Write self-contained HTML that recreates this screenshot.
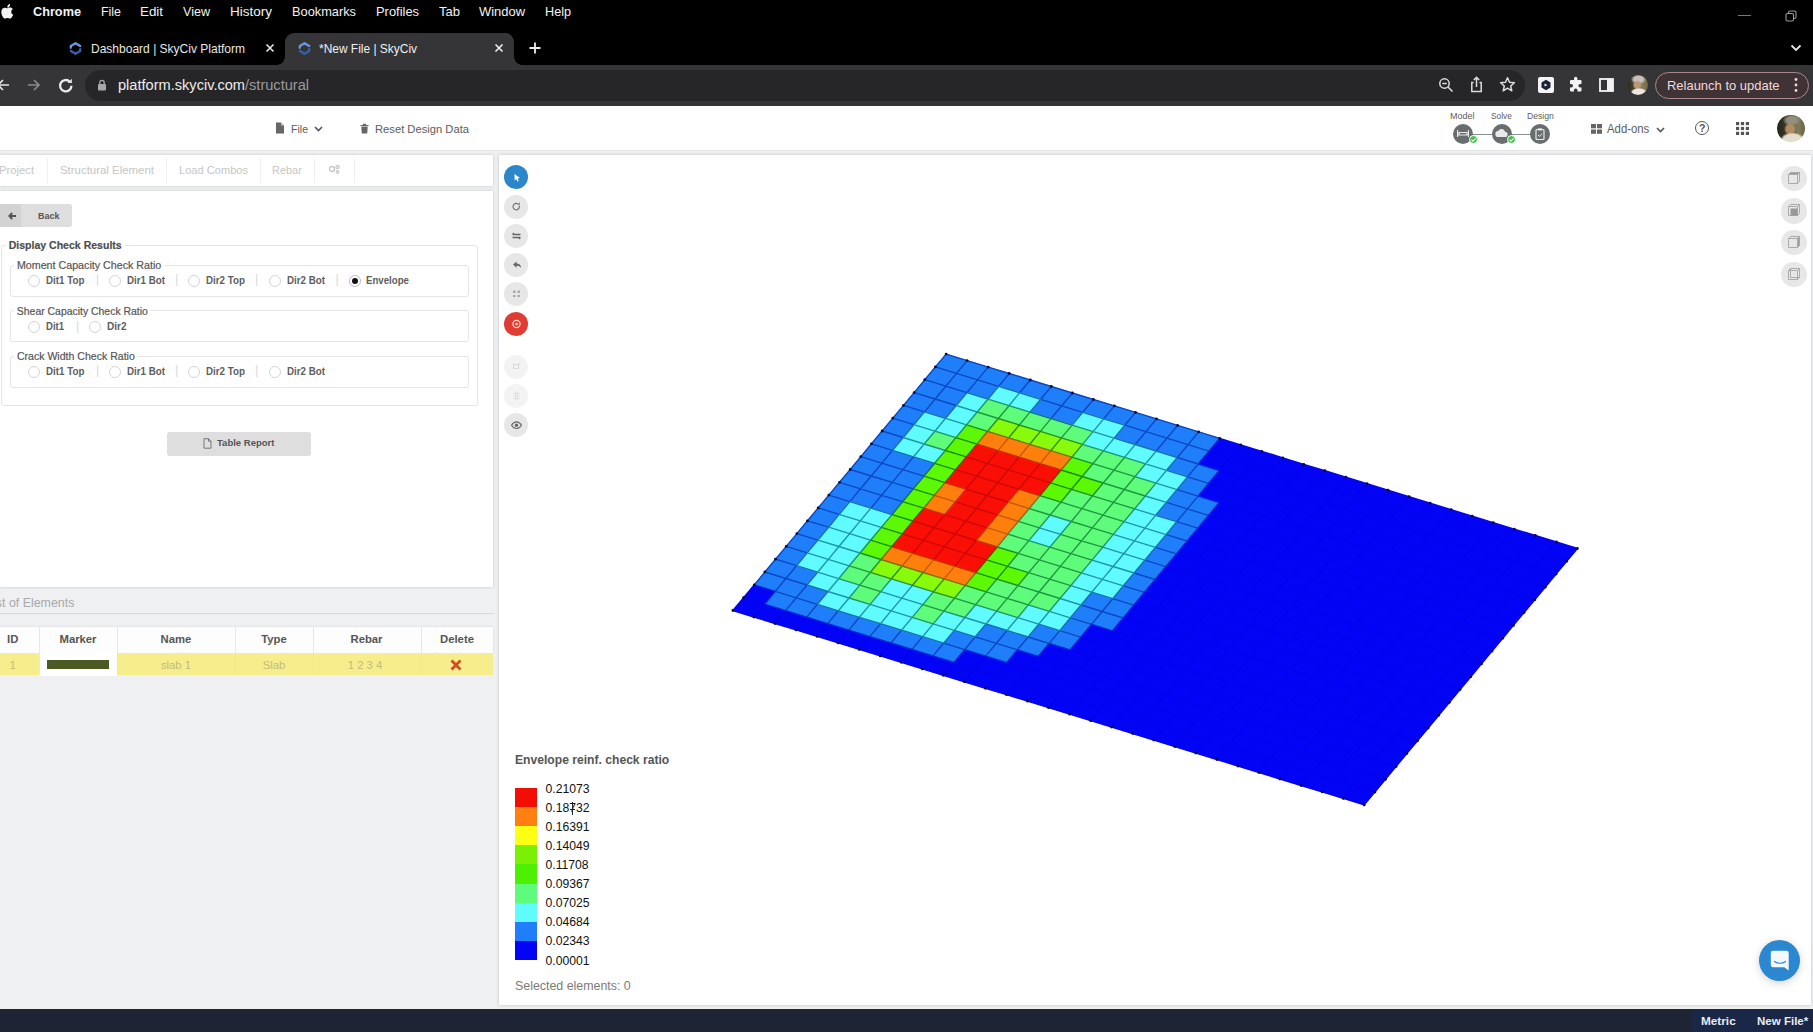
<!DOCTYPE html>
<html><head><meta charset="utf-8"><title>SkyCiv</title>
<style>
*{box-sizing:border-box;margin:0;padding:0}
html,body{width:1813px;height:1032px;overflow:hidden;background:#eff0f1;font-family:"Liberation Sans",sans-serif}
.abs,.t{position:absolute;white-space:nowrap}
.t{line-height:1;transform-origin:0 50%}
#menubar{left:0;top:0;width:1813px;height:65px;background:#000}
.mb{color:#f2f2f2;font-size:13.2px;top:5px}
#toolbar{left:0;top:65px;width:1813px;height:40.5px;background:#353537}
#activetab{left:285px;top:33px;width:229px;height:32px;background:#353537;border-radius:9px 9px 0 0}
#pill{left:85px;top:69.500px;width:1440px;height:31px;border-radius:15.500px;background:#262628}
#apphead{left:0;top:105.500px;width:1813px;height:45px;background:#fff;border-bottom:1px solid #e2e2e2}
#tabs{left:0;top:155px;width:493px;height:31px;background:#fff;box-shadow:0 0 3px rgba(0,0,0,.18)}
#card{left:0;top:191px;width:493px;height:395.500px;background:#fff;box-shadow:0 0 3px rgba(0,0,0,.18)}
.tab{color:#c6c6c6;font-size:11.3px;top:165px}
.sep{width:1px;background:#efefef;top:158px;height:25px}
.fs{border:1px solid #e5e5e5;border-radius:3px}
.lg{background:#fff;color:#555;font-size:11px;-webkit-text-stroke:.2px #555}
.radio{width:12px;height:12px;border-radius:50%;border:1px solid #d4d4d4;background:#fff}
.rl{color:#5e5e5e;font-size:10px;font-weight:bold;margin-top:.9px}
.bar{color:#d8d8d8;font-size:12px}
.btn{background:#dedede;border-radius:3px}
#canvas{left:499px;top:155px;width:1312px;height:850px;background:#fff;box-shadow:0 0 3px rgba(0,0,0,.2)}
.tool{width:24px;height:24px;border-radius:50%;background:#e7e7e7}
#status{left:0;top:1009px;width:1813px;height:23px;background:#1e2433}
.th{color:#555;font-size:11.3px;font-weight:bold;top:633.8px}
.td{color:#c4bc79;font-size:11.3px;top:659.8px}
</style><style>#m0{transform:scaleX(0.963)}#m1{transform:scaleX(0.941)}#m2{transform:scaleX(1.012)}#m3{transform:scaleX(0.952)}#m4{transform:scaleX(1.024)}#m5{transform:scaleX(0.970)}#m6{transform:scaleX(0.978)}#m7{transform:scaleX(0.988)}#m8{transform:scaleX(0.981)}#m9{transform:scaleX(0.959)}#tb1{transform:scaleX(0.986)}#tb2{transform:scaleX(0.980)}#url{transform:scaleX(1.042)}#relaunch{transform:scaleX(0.975)}#hfile{transform:scaleX(0.917)}#hreset{transform:scaleX(0.974)}#hmodel{transform:scaleX(1.003)}#hsolve{transform:scaleX(0.928)}#hdesign{transform:scaleX(0.960)}#haddons{transform:scaleX(0.946)}#tse{transform:scaleX(1.011)}#tlc{transform:scaleX(0.981)}#trb{transform:scaleX(0.968)}#back{transform:scaleX(0.909)}#dcr{transform:scaleX(0.893)}#l1{transform:scaleX(0.972)}#l2{transform:scaleX(0.948)}#l3{transform:scaleX(0.960)}#r11{transform:scaleX(0.978)}#r12{transform:scaleX(0.977)}#r13{transform:scaleX(0.979)}#r14{transform:scaleX(0.977)}#r15{transform:scaleX(0.967)}#r21{transform:scaleX(0.952)}#r22{transform:scaleX(1.002)}#r31{transform:scaleX(0.978)}#r32{transform:scaleX(0.977)}#r33{transform:scaleX(0.979)}#r34{transform:scaleX(0.977)}#trep{transform:scaleX(0.964)}#lgt{transform:scaleX(1.010)}#sel{transform:scaleX(1.033)}#metric{transform:scaleX(1.091)}#newfile{transform:scaleX(1.068)}</style></head><body>

<!-- ===== macOS menu bar + chrome tab strip ===== -->
<div id="menubar" class="abs"></div>
<svg class="abs" style="left:-.3px;top:3px" width="14" height="17" viewBox="0 0 14 17"><path d="M11.2 9c0-1.9 1.5-2.8 1.6-2.9-.9-1.3-2.200-1.400-2.700-1.500-1.100-.1-2.200.700-2.800.700-.6 0-1.500-.700-2.400-.600C3.600 4.700 2.500 5.400 1.900 6.500.600 8.700 1.600 12 2.800 13.800c.6.900 1.300 1.900 2.300 1.800.9 0 1.300-.6 2.400-.6s1.400.6 2.400.6 1.600-.900 2.200-1.800c.7-1 1-2 1-2.100 0 0-1.900-.700-1.900-2.700zM9.400 3.400c.5-.6.800-1.500.7-2.300-.7 0-1.600.5-2.100 1.100-.5.500-.9 1.400-.7 2.200.8.100 1.600-.4 2.100-1z" fill="#f2f2f2"/></svg>
<span class="t mb" style="left:33px;font-weight:bold" id="m0">Chrome</span>
<span class="t mb" style="left:101px" id="m1">File</span>
<span class="t mb" style="left:140px" id="m2">Edit</span>
<span class="t mb" style="left:183px" id="m3">View</span>
<span class="t mb" style="left:230px" id="m4">History</span>
<span class="t mb" style="left:292px" id="m5">Bookmarks</span>
<span class="t mb" style="left:376px" id="m6">Profiles</span>
<span class="t mb" style="left:439px" id="m7">Tab</span>
<span class="t mb" style="left:479px" id="m8">Window</span>
<span class="t mb" style="left:545px" id="m9">Help</span>
<!-- window controls -->
<div class="abs" style="left:1738px;top:15px;width:13px;height:1px;background:#777"></div>
<svg class="abs" style="left:1785px;top:10px" width="12" height="12" viewBox="0 0 12 12" fill="none" stroke="#9a9a9a" stroke-width="1.1"><rect x="1" y="3.500" width="7.500" height="7.500" rx="1.500"/><path d="M3.500 3.500V2.500a1.500 1.500 0 0 1 1.500-1.500h4.500a1.500 1.500 0 0 1 1.500 1.500v4.500a1.500 1.500 0 0 1-1.500 1.500h-1"/></svg>
<svg class="abs" style="left:1790px;top:44px" width="12" height="8" viewBox="0 0 12 8" fill="none" stroke="#e8e8e8" stroke-width="1.800"><path d="M1.500 1.500l4.500 4.500 4.500-4.500"/></svg>

<!-- tabs -->
<div id="activetab" class="abs"></div>
<div class="abs" style="left:277px;top:57px;width:8px;height:8px;background:radial-gradient(circle at 0 0,#000 7.500px,#353538 8px)"></div>
<div class="abs" style="left:514px;top:57px;width:8px;height:8px;background:radial-gradient(circle at 100% 0,#000 7.500px,#353538 8px)"></div>
<svg class="abs" style="left:68px;top:41px" width="15" height="15" viewBox="0 0 15 15" fill="none" stroke-linecap="round" stroke-linejoin="round"><path d="M2.800 6.800V5L7.500 2.200 12.200 5" stroke="#6a98dc" stroke-width="2.300"/><path d="M12.200 8.200V10L7.500 12.800 2.800 10" stroke="#3a5fa8" stroke-width="2.300"/></svg>
<span class="t" style="left:91px;top:42.500px;color:#e8e8e8;font-size:12.200px" id="tb1">Dashboard | SkyCiv Platform</span>
<svg class="abs" style="left:265px;top:43px" width="10" height="10" viewBox="0 0 10 10" stroke="#e8e8e8" stroke-width="1.600"><path d="M1.500 1.500l7 7M8.500 1.500l-7 7"/></svg>
<svg class="abs" style="left:297px;top:41px" width="15" height="15" viewBox="0 0 15 15" fill="none" stroke-linecap="round" stroke-linejoin="round"><path d="M2.800 6.800V5L7.500 2.200 12.200 5" stroke="#6a98dc" stroke-width="2.300"/><path d="M12.200 8.200V10L7.500 12.800 2.800 10" stroke="#3a5fa8" stroke-width="2.300"/></svg>
<span class="t" style="left:319px;top:42.500px;color:#f0f0f0;font-size:12.200px" id="tb2">*New File | SkyCiv</span>
<svg class="abs" style="left:494px;top:43px" width="10" height="10" viewBox="0 0 10 10" stroke="#f0f0f0" stroke-width="1.600"><path d="M1.500 1.500l7 7M8.500 1.500l-7 7"/></svg>
<svg class="abs" style="left:529px;top:42px" width="12" height="12" viewBox="0 0 12 12" stroke="#f0f0f0" stroke-width="1.800"><path d="M6 .5v11M.5 6h11"/></svg>

<!-- toolbar -->
<div id="toolbar" class="abs"></div>
<div id="pill" class="abs"></div>
<svg class="abs" style="left:-4px;top:78px" width="14" height="14" viewBox="0 0 14 14" fill="none" stroke="#e4e4e4" stroke-width="1.700"><path d="M13 7H2M7 2L2 7l5 5"/></svg>
<svg class="abs" style="left:27px;top:78px" width="14" height="14" viewBox="0 0 14 14" fill="none" stroke="#8a8a8c" stroke-width="1.700"><path d="M1 7h11M7 2l5 5-5 5"/></svg>
<svg class="abs" style="left:56.500px;top:76.500px" width="17.500" height="17.500" viewBox="0 0 16 16" fill="none" stroke="#ececec" stroke-width="2.100"><path d="M13.200 8a5.200 5.200 0 1 1-1.600-3.800"/><path d="M13.600 1.500v4h-4z" fill="#e4e4e4" stroke="none"/></svg>
<svg class="abs" style="left:97px;top:79px" width="10" height="12" viewBox="0 0 10 12"><rect x="1" y="5" width="8" height="6.500" rx="1" fill="#a8a8aa"/><path d="M2.800 5V3.500a2.200 2.200 0 0 1 4.400 0V5" fill="none" stroke="#a8a8aa" stroke-width="1.300"/></svg>
<span class="t" style="left:118px;top:78px;color:#ededed;font-size:14px" id="url">platform.skyciv.com<span style="color:#9b9b9d">/structural</span></span>
<!-- right icons -->
<svg class="abs" style="left:1438px;top:77px" width="16" height="16" viewBox="0 0 16 16" fill="none" stroke="#dcdcdc" stroke-width="1.500"><circle cx="6.500" cy="6.500" r="4.700"/><path d="M10 10l4.500 4.500M4.300 6.500h4.400"/></svg>
<svg class="abs" style="left:1469px;top:76px" width="15" height="17" viewBox="0 0 15 17" fill="none" stroke="#dcdcdc" stroke-width="1.500"><path d="M4.500 6.500H2.800v9h9.400v-9h-1.700M7.500 11V1.500M4.800 4L7.500 1.300 10.200 4"/></svg>
<svg class="abs" style="left:1499px;top:76px" width="17" height="17" viewBox="0 0 17 17" fill="none" stroke="#dcdcdc" stroke-width="1.500" stroke-linejoin="round"><path d="M8.500 1.800l2 4.500 4.900.5-3.700 3.200 1.100 4.800-4.300-2.600-4.300 2.600 1.100-4.800L1.600 6.800l4.900-.5z"/></svg>
<div class="abs" style="left:1538px;top:77px;width:16px;height:16px;background:#f4f4f4;border-radius:2px"></div>
<svg class="abs" style="left:1540px;top:79px" width="12" height="12" viewBox="0 0 12 12"><path d="M6 .8l4.500 2.600v5.200L6 11.200 1.500 8.600V3.400z" fill="#1a2438"/><path d="M4.500 4.500l3 1.500-3 1.500z" fill="#f4f4f4"/></svg>
<svg class="abs" style="left:1567px;top:76px" width="18" height="18" viewBox="0 0 18 18"><path d="M7 2.500a1.700 1.700 0 0 1 3.400 0V4h3.100a1 1 0 0 1 1 1v3h-1.300a1.800 1.800 0 0 0 0 3.600h1.300v3a1 1 0 0 1-1 1h-3v-1.300a1.800 1.800 0 0 0-3.600 0v1.300H4a1 1 0 0 1-1-1v-3.100h1.300a1.700 1.700 0 0 0 0-3.400H3V5a1 1 0 0 1 1-1h3z" fill="#f2f2f2"/></svg>
<svg class="abs" style="left:1599px;top:78px" width="15" height="14" viewBox="0 0 15 14"><rect x="1" y="1" width="13" height="12" fill="none" stroke="#f2f2f2" stroke-width="1.800"/><rect x="8" y="1" width="6" height="12" fill="#f2f2f2"/></svg>
<div class="abs" style="left:1627.500px;top:74.500px;width:20.500px;height:20.500px;border-radius:50%;background:radial-gradient(ellipse 42% 24% at 54% 88%,#efe6dc 0 75%,transparent 100%),radial-gradient(ellipse 24% 24% at 47% 50%,#b99873 0 65%,transparent 100%),radial-gradient(ellipse 38% 26% at 52% 22%,#cbbfbd 0 60%,transparent 100%),linear-gradient(90deg,#2e2e1e 0%,#48462f 35%,#857d56 75%,#6e6848 100%)"></div>
<div class="abs" style="left:1655px;top:72px;width:154px;height:27px;border-radius:14px;background:#3f3336;border:1px solid #a98a90"></div>
<span class="t" style="left:1667px;top:78.600px;color:#f3d9dc;font-size:13.300px" id="relaunch">Relaunch to update</span>
<svg class="abs" style="left:1794px;top:77px" width="4" height="16" viewBox="0 0 4 16" fill="#f3d9dc"><circle cx="2" cy="2.500" r="1.400"/><circle cx="2" cy="8" r="1.400"/><circle cx="2" cy="13.500" r="1.400"/></svg>

<!-- ===== app header ===== -->
<div id="apphead" class="abs"></div>
<svg class="abs" style="left:275px;top:122px" width="10" height="12" viewBox="0 0 10 12"><path d="M1 .5h5l3 3v8H1z" fill="#666"/><path d="M6 .5v3h3" fill="#bbb"/></svg>
<span class="t" style="left:291px;top:123.700px;color:#5c5c5c;font-size:11.500px" id="hfile">File</span>
<svg class="abs" style="left:314px;top:126px" width="9" height="6" viewBox="0 0 9 6" fill="none" stroke="#555" stroke-width="1.600"><path d="M1 1l3.500 3.500L8 1"/></svg>
<svg class="abs" style="left:360px;top:123px" width="9" height="11" viewBox="0 0 9 11"><path d="M.5 2h8v1h-8zM3 .8h3v1.200H3zM1.300 3.600h6.400l-.5 6.900H1.800z" fill="#666"/></svg>
<span class="t" style="left:375px;top:123.700px;color:#5c5c5c;font-size:11.500px" id="hreset">Reset Design Data</span>
<span class="t" style="left:1450px;top:111.700px;color:#5c5c5c;font-size:9px" id="hmodel">Model</span>
<span class="t" style="left:1491px;top:111.700px;color:#5c5c5c;font-size:9px" id="hsolve">Solve</span>
<span class="t" style="left:1527px;top:111.700px;color:#5c5c5c;font-size:9px" id="hdesign">Design</span>
<div class="abs" style="left:1463px;top:133.500px;width:78px;height:1px;background:#8a8f8f"></div>
<div class="abs" style="left:1453px;top:124px;width:20px;height:20px;border-radius:50%;background:#686d6d"></div>
<div class="abs" style="left:1491.500px;top:124px;width:20px;height:20px;border-radius:50%;background:#686d6d"></div>
<div class="abs" style="left:1530px;top:124px;width:20px;height:20px;border-radius:50%;background:#686d6d"></div>
<svg class="abs" style="left:1457px;top:129px" width="12" height="9" viewBox="0 0 12 9"><path d="M.5 1v7M11.500 1v7M.5 6h11M2 5.500V3.500h8v2" fill="none" stroke="#e8eaea" stroke-width="1.200"/></svg>
<svg class="abs" style="left:1495px;top:128px" width="13" height="10" viewBox="0 0 13 10"><path d="M3.500 9a3 3 0 0 1-.3-6A3.600 3.600 0 0 1 10 3.800 2.600 2.600 0 0 1 10 9z" fill="#e8eaea"/></svg>
<svg class="abs" style="left:1535px;top:128px" width="10" height="12" viewBox="0 0 10 12"><rect x="1" y="1.500" width="8" height="10" rx="1" fill="none" stroke="#e8eaea" stroke-width="1.200"/><rect x="3" y=".3" width="4" height="2.200" fill="#e8eaea"/><path d="M3 7l1.500 1.500L7 5.500" fill="none" stroke="#e8eaea" stroke-width="1"/></svg>
<div class="abs" style="left:1468.500px;top:135px;width:9px;height:9px;border-radius:50%;background:#3fc14b;border:1px solid #fff"></div>
<div class="abs" style="left:1507px;top:135px;width:9px;height:9px;border-radius:50%;background:#3fc14b;border:1px solid #fff"></div>
<svg class="abs" style="left:1468.500px;top:135px" width="9" height="9" viewBox="0 0 9 9" fill="none" stroke="#fff" stroke-width="1.100"><path d="M2.500 4.700l1.500 1.400 2.600-2.800"/></svg><svg class="abs" style="left:1507px;top:135px" width="9" height="9" viewBox="0 0 9 9" fill="none" stroke="#fff" stroke-width="1.100"><path d="M2.500 4.700l1.500 1.400 2.600-2.800"/></svg><svg class="abs" style="left:1591px;top:123.800px" width="11" height="10" viewBox="0 0 11 10" fill="#666"><rect x="0" y="0" width="5" height="4.300"/><rect x="6" y="0" width="5" height="4.300"/><rect x="0" y="5.500" width="5" height="4.300"/><rect x="6" y="5.500" width="5" height="4.300"/></svg>
<span class="t" style="left:1607px;top:123.300px;color:#5c5c5c;font-size:12px" id="haddons">Add-ons</span>
<svg class="abs" style="left:1656px;top:127px" width="9" height="6" viewBox="0 0 9 6" fill="none" stroke="#555" stroke-width="1.600"><path d="M1 1l3.500 3.500L8 1"/></svg>
<div class="abs" style="left:1695px;top:121px;width:14px;height:14px;border-radius:50%;border:1.300px solid #555"></div>
<span class="t" style="left:1699px;top:123px;color:#555;font-size:10.500px;font-weight:bold">?</span>
<svg class="abs" style="left:1736px;top:122px" width="13" height="13" viewBox="0 0 13 13" fill="#555"><rect x="0" y="0" width="3.200" height="3.200"/><rect x="4.900" y="0" width="3.200" height="3.200"/><rect x="9.800" y="0" width="3.200" height="3.200"/><rect x="0" y="4.900" width="3.200" height="3.200"/><rect x="4.900" y="4.900" width="3.200" height="3.200"/><rect x="9.800" y="4.900" width="3.200" height="3.200"/><rect x="0" y="9.800" width="3.200" height="3.200"/><rect x="4.900" y="9.800" width="3.200" height="3.200"/><rect x="9.800" y="9.800" width="3.200" height="3.200"/></svg>
<div class="abs" style="left:1777px;top:114.500px;width:27.500px;height:27.500px;border-radius:50%;background:radial-gradient(ellipse 44% 28% at 55% 92%,#e6dccd 0 75%,transparent 100%),radial-gradient(ellipse 22% 24% at 47% 52%,#b08c64 0 65%,transparent 100%),radial-gradient(ellipse 32% 22% at 52% 20%,#92907a 0 55%,transparent 100%),linear-gradient(90deg,#24241a 0%,#3a3927 35%,#827c57 75%,#6a6546 100%)"></div>

<!-- ===== left panel ===== -->
<div id="tabs" class="abs"></div>
<div id="card" class="abs"></div>
<span class="t tab" style="left:-1px" id="tp">Project</span>
<div class="abs sep" style="left:47px"></div>
<span class="t tab" style="left:59.500px" id="tse">Structural Element</span>
<div class="abs sep" style="left:166px"></div>
<span class="t tab" style="left:178.500px" id="tlc">Load Combos</span>
<div class="abs sep" style="left:260px"></div>
<span class="t tab" style="left:272px" id="trb">Rebar</span>
<div class="abs sep" style="left:314px"></div>
<svg class="abs" style="left:328px;top:164px" width="12" height="10" viewBox="0 0 12 10" fill="none" stroke="#c9c9c9" stroke-width="1.400"><circle cx="4" cy="5" r="2.500"/><circle cx="9.500" cy="3" r="1.500"/><circle cx="9.500" cy="7.800" r="1.200"/></svg>
<div class="abs sep" style="left:354px"></div>

<!-- back button -->
<div class="abs btn" style="left:-4px;top:204px;width:76px;height:23px"></div>
<div class="abs" style="left:0;top:204px;width:21px;height:23px;background:#d3d3d3"></div>
<svg class="abs" style="left:7.500px;top:211.500px" width="8.500" height="8" viewBox="0 0 10 9" fill="none" stroke="#555" stroke-width="2.200"><path d="M9.500 4.500H1.500M5 1L1.500 4.500 5 8"/></svg>
<span class="t" style="left:37.500px;top:210.600px;color:#555;font-size:9.900px;font-weight:bold" id="back">Back</span>

<!-- fieldsets -->
<div class="abs fs" style="left:1px;top:245px;width:477px;height:160.700px"></div>
<span class="t lg" style="left:6px;top:240px;padding:0 3px;font-size:11.800px;font-weight:bold;color:#4c4c4c" id="dcr">Display Check Results</span>

<div class="abs fs" style="left:9.500px;top:265px;width:459px;height:31.500px"></div>
<span class="t lg" style="left:14px;top:259.700px;padding:0 3px" id="l1">Moment Capacity Check Ratio</span>
<div class="abs fs" style="left:9.500px;top:310.200px;width:459px;height:32px"></div>
<span class="t lg" style="left:14px;top:305.700px;padding:0 3px" id="l2">Shear Capacity Check Ratio</span>
<div class="abs fs" style="left:9.500px;top:356px;width:459px;height:32px"></div>
<span class="t lg" style="left:14px;top:350.600px;padding:0 3px" id="l3">Crack Width Check Ratio</span>

<!-- radios row 1 (y=280.500) -->
<div class="abs radio" style="left:28px;top:274.500px"></div><span class="t rl" style="left:46px;top:275px" id="r11">Dit1 Top</span><span class="t bar" style="left:96px;top:273px">|</span>
<div class="abs radio" style="left:108.500px;top:274.500px"></div><span class="t rl" style="left:126.500px;top:275px" id="r12">Dir1 Bot</span><span class="t bar" style="left:175px;top:273px">|</span>
<div class="abs radio" style="left:187.500px;top:274.500px"></div><span class="t rl" style="left:206px;top:275px" id="r13">Dir2 Top</span><span class="t bar" style="left:255px;top:273px">|</span>
<div class="abs radio" style="left:268.500px;top:274.500px"></div><span class="t rl" style="left:287px;top:275px" id="r14">Dir2 Bot</span><span class="t bar" style="left:335.500px;top:273px">|</span>
<div class="abs radio" style="left:348.500px;top:274.500px;border-color:#bdbdbd"></div><div class="abs" style="left:351.500px;top:277.500px;width:6px;height:6px;border-radius:50%;background:#111"></div><span class="t rl" style="left:366px;top:275px" id="r15">Envelope</span>
<!-- radios row 2 (y=326) -->
<div class="abs radio" style="left:28px;top:321px"></div><span class="t rl" style="left:46px;top:321.500px" id="r21">Dit1</span><span class="t bar" style="left:76px;top:319.500px">|</span>
<div class="abs radio" style="left:88.500px;top:321px"></div><span class="t rl" style="left:106.500px;top:321.500px" id="r22">Dir2</span>
<!-- radios row 3 (y=372) -->
<div class="abs radio" style="left:28px;top:365.500px"></div><span class="t rl" style="left:46px;top:366.600px" id="r31">Dit1 Top</span><span class="t bar" style="left:96px;top:364px">|</span>
<div class="abs radio" style="left:108.500px;top:365.500px"></div><span class="t rl" style="left:126.500px;top:366.600px" id="r32">Dir1 Bot</span><span class="t bar" style="left:175px;top:364px">|</span>
<div class="abs radio" style="left:187.500px;top:365.500px"></div><span class="t rl" style="left:206px;top:366.600px" id="r33">Dir2 Top</span><span class="t bar" style="left:255px;top:364px">|</span>
<div class="abs radio" style="left:268.500px;top:365.500px"></div><span class="t rl" style="left:287px;top:366.600px" id="r34">Dir2 Bot</span>

<!-- table report -->
<div class="abs btn" style="left:166.500px;top:432px;width:144px;height:23.500px"></div>
<svg class="abs" style="left:203px;top:438px" width="9" height="11" viewBox="0 0 9 11" fill="none" stroke="#777" stroke-width="1"><path d="M1 .7h4.500l2.500 2.500v7H1zM5.500 .7v2.500h2.500"/></svg>
<span class="t" style="left:216.500px;top:437.500px;color:#555;font-size:9.900px;font-weight:bold;margin-top:.4px" id="trep">Table Report</span>

<!-- list of elements -->
<span class="t" style="left:-13.800px;top:597px;color:#a9a9a9;font-size:12.400px" id="loe">List of Elements</span>
<div class="abs" style="left:0;top:613px;width:494px;height:1px;background:#dadada"></div>
<div class="abs" style="left:0;top:626.500px;width:493px;height:26.500px;background:#fdfdfd;box-shadow:0 0 2px rgba(0,0,0,.12)"></div>
<div class="abs" style="left:0;top:653px;width:493px;height:22px;background:#f6ed8d"></div>
<div class="abs" style="left:39px;top:653px;width:77.500px;height:23px;background:#fff"></div>
<div class="abs" style="left:47px;top:659.500px;width:62px;height:9px;background:#4c5922"></div>
<div class="abs" style="left:38.500px;top:627px;width:1px;height:48px;background:#e6e3c9;opacity:.8"></div>
<div class="abs" style="left:116.500px;top:627px;width:1px;height:48px;background:#e6e3c9;opacity:.8"></div>
<div class="abs" style="left:235px;top:627px;width:1px;height:48px;background:#e6e3c9;opacity:.8"></div>
<div class="abs" style="left:313px;top:627px;width:1px;height:48px;background:#e6e3c9;opacity:.8"></div>
<div class="abs" style="left:421px;top:627px;width:1px;height:48px;background:#e6e3c9;opacity:.8"></div>
<span class="t th" style="left:12.700px;transform:translateX(-50%)">ID</span>
<span class="t th" style="left:78px;transform:translateX(-50%)">Marker</span>
<span class="t th" style="left:176px;transform:translateX(-50%)">Name</span>
<span class="t th" style="left:274px;transform:translateX(-50%)">Type</span>
<span class="t th" style="left:366.500px;transform:translateX(-50%)">Rebar</span>
<span class="t th" style="left:457px;transform:translateX(-50%)">Delete</span>
<span class="t td" style="left:12.700px;transform:translateX(-50%)">1</span>
<span class="t td" style="left:176px;transform:translateX(-50%)">slab 1</span>
<span class="t td" style="left:274px;transform:translateX(-50%)">Slab</span>
<span class="t td" style="left:365px;transform:translateX(-50%)">1 2 3 4</span>
<svg class="abs" style="left:450px;top:659px" width="12" height="12" viewBox="0 0 12 12" stroke="#d8481e" stroke-width="2.800"><path d="M1.500 1.500l9 9M10.500 1.500l-9 9"/></svg>

<!-- ===== canvas ===== -->
<div id="canvas" class="abs"></div>
<svg class="abs" style="left:0;top:0" width="1813" height="1032" viewBox="0 0 1813 1032">
<path d="M946.1 354.1 L1577.4 548.5 L1364.2 804.9 L732.9 610.5Z" fill="#0303f6"/>
<path d="M946.1 354.1 L967.1 360.6 L956.5 373.4 L935.4 366.9ZM967.1 360.6 L988.2 367.1 L977.5 379.9 L956.5 373.4ZM988.2 367.1 L1009.2 373.5 L998.6 386.4 L977.5 379.9ZM1009.2 373.5 L1030.3 380.0 L1019.6 392.8 L998.6 386.4ZM1030.3 380.0 L1051.3 386.5 L1040.7 399.3 L1019.6 392.8ZM1051.3 386.5 L1072.4 393.0 L1061.7 405.8 L1040.7 399.3ZM1072.4 393.0 L1093.4 399.5 L1082.7 412.3 L1061.7 405.8ZM1093.4 399.5 L1114.4 405.9 L1103.8 418.8 L1082.7 412.3ZM1114.4 405.9 L1135.5 412.4 L1124.8 425.2 L1103.8 418.8ZM1135.5 412.4 L1156.5 418.9 L1145.9 431.7 L1124.8 425.2ZM1156.5 418.9 L1177.6 425.4 L1166.9 438.2 L1145.9 431.7ZM1177.6 425.4 L1198.6 431.9 L1188.0 444.7 L1166.9 438.2ZM1198.6 431.9 L1219.7 438.3 L1209.0 451.2 L1188.0 444.7ZM935.4 366.9 L956.5 373.4 L945.8 386.2 L924.8 379.7ZM956.5 373.4 L977.5 379.9 L966.9 392.7 L945.8 386.2ZM977.5 379.9 L998.6 386.4 L987.9 399.2 L966.9 392.7ZM1040.7 399.3 L1061.7 405.8 L1051.0 418.6 L1030.0 412.1ZM1061.7 405.8 L1082.7 412.3 L1072.1 425.1 L1051.0 418.6ZM1124.8 425.2 L1145.9 431.7 L1135.2 444.5 L1114.2 438.1ZM1145.9 431.7 L1166.9 438.2 L1156.3 451.0 L1135.2 444.5ZM1166.9 438.2 L1188.0 444.7 L1177.3 457.5 L1156.3 451.0ZM1188.0 444.7 L1209.0 451.2 L1198.3 464.0 L1177.3 457.5ZM924.8 379.7 L945.8 386.2 L935.2 399.0 L914.1 392.6ZM945.8 386.2 L966.9 392.7 L956.2 405.5 L935.2 399.0ZM1177.3 457.5 L1198.3 464.0 L1187.7 476.8 L1166.6 470.3ZM1198.3 464.0 L1219.4 470.5 L1208.7 483.3 L1187.7 476.8ZM914.1 392.6 L935.2 399.0 L924.5 411.9 L903.5 405.4ZM935.2 399.0 L956.2 405.5 L945.5 418.3 L924.5 411.9ZM1187.7 476.8 L1208.7 483.3 L1198.1 496.1 L1177.0 489.6ZM903.5 405.4 L924.5 411.9 L913.8 424.7 L892.8 418.2ZM1177.0 489.6 L1198.1 496.1 L1187.4 508.9 L1166.4 502.4ZM1198.1 496.1 L1219.1 502.6 L1208.5 515.4 L1187.4 508.9ZM892.8 418.2 L913.8 424.7 L903.2 437.5 L882.1 431.0ZM1166.4 502.4 L1187.4 508.9 L1176.7 521.7 L1155.7 515.3ZM1187.4 508.9 L1208.5 515.4 L1197.8 528.2 L1176.7 521.7ZM882.1 431.0 L903.2 437.5 L892.5 450.3 L871.5 443.8ZM1176.7 521.7 L1197.8 528.2 L1187.1 541.0 L1166.1 534.6ZM871.5 443.8 L892.5 450.3 L881.9 463.1 L860.8 456.7ZM892.5 450.3 L913.6 456.8 L902.9 469.6 L881.9 463.1ZM913.6 456.8 L934.6 463.3 L924.0 476.1 L902.9 469.6ZM1166.1 534.6 L1187.1 541.0 L1176.5 553.9 L1155.4 547.4ZM860.8 456.7 L881.9 463.1 L871.2 476.0 L850.2 469.5ZM881.9 463.1 L902.9 469.6 L892.2 482.4 L871.2 476.0ZM902.9 469.6 L924.0 476.1 L913.3 488.9 L892.2 482.4ZM1155.4 547.4 L1176.5 553.9 L1165.8 566.7 L1144.8 560.2ZM850.2 469.5 L871.2 476.0 L860.5 488.8 L839.5 482.3ZM871.2 476.0 L892.2 482.4 L881.6 495.3 L860.5 488.8ZM892.2 482.4 L913.3 488.9 L902.6 501.7 L881.6 495.3ZM1144.8 560.2 L1165.8 566.7 L1155.2 579.5 L1134.1 573.0ZM839.5 482.3 L860.5 488.8 L849.9 501.6 L828.8 495.1ZM860.5 488.8 L881.6 495.3 L870.9 508.1 L849.9 501.6ZM881.6 495.3 L902.6 501.7 L892.0 514.6 L870.9 508.1ZM1134.1 573.0 L1155.2 579.5 L1144.5 592.3 L1123.4 585.8ZM828.8 495.1 L849.9 501.6 L839.2 514.4 L818.2 507.9ZM1123.4 585.8 L1144.5 592.3 L1133.8 605.1 L1112.8 598.7ZM818.2 507.9 L839.2 514.4 L828.6 527.2 L807.5 520.8ZM1091.7 592.2 L1112.8 598.7 L1102.1 611.5 L1081.1 605.0ZM1112.8 598.7 L1133.8 605.1 L1123.2 618.0 L1102.1 611.5ZM807.5 520.8 L828.6 527.2 L817.9 540.1 L796.9 533.6ZM1081.1 605.0 L1102.1 611.5 L1091.5 624.3 L1070.4 617.8ZM1102.1 611.5 L1123.2 618.0 L1112.5 630.8 L1091.5 624.3ZM796.9 533.6 L817.9 540.1 L807.2 552.9 L786.2 546.4ZM1070.4 617.8 L1091.5 624.3 L1080.8 637.1 L1059.8 630.6ZM786.2 546.4 L807.2 552.9 L796.6 565.7 L775.5 559.2ZM1038.7 624.2 L1059.8 630.6 L1049.1 643.5 L1028.1 637.0ZM1059.8 630.6 L1080.8 637.1 L1070.1 649.9 L1049.1 643.5ZM775.5 559.2 L796.6 565.7 L785.9 578.5 L764.9 572.0ZM796.6 565.7 L817.6 572.2 L807.0 585.0 L785.9 578.5ZM986.0 624.0 L1007.0 630.5 L996.4 643.3 L975.3 636.8ZM1007.0 630.5 L1028.1 637.0 L1017.4 649.8 L996.4 643.3ZM1028.1 637.0 L1049.1 643.5 L1038.4 656.3 L1017.4 649.8ZM764.9 572.0 L785.9 578.5 L775.3 591.3 L754.2 584.9ZM785.9 578.5 L807.0 585.0 L796.3 597.8 L775.3 591.3ZM807.0 585.0 L828.0 591.5 L817.4 604.3 L796.3 597.8ZM954.3 630.4 L975.3 636.8 L964.7 649.7 L943.6 643.2ZM975.3 636.8 L996.4 643.3 L985.7 656.1 L964.7 649.7ZM996.4 643.3 L1017.4 649.8 L1006.7 662.6 L985.7 656.1ZM775.3 591.3 L796.3 597.8 L785.6 610.6 L764.6 604.2ZM796.3 597.8 L817.4 604.3 L806.7 617.1 L785.6 610.6ZM817.4 604.3 L838.4 610.8 L827.7 623.6 L806.7 617.1ZM838.4 610.8 L859.4 617.3 L848.8 630.1 L827.7 623.6ZM859.4 617.3 L880.5 623.7 L869.8 636.6 L848.8 630.1ZM880.5 623.7 L901.5 630.2 L890.9 643.0 L869.8 636.6ZM901.5 630.2 L922.6 636.7 L911.9 649.5 L890.9 643.0ZM922.6 636.7 L943.6 643.2 L932.9 656.0 L911.9 649.5ZM943.6 643.2 L964.7 649.7 L954.0 662.5 L932.9 656.0Z" fill="#1f7efa" stroke="#1f7efa" stroke-width="0.6"/>
<path d="M998.6 386.4 L1019.6 392.8 L1009.0 405.7 L987.9 399.2ZM1019.6 392.8 L1040.7 399.3 L1030.0 412.1 L1009.0 405.7ZM1082.7 412.3 L1103.8 418.8 L1093.1 431.6 L1072.1 425.1ZM1103.8 418.8 L1124.8 425.2 L1114.2 438.1 L1093.1 431.6ZM966.9 392.7 L987.9 399.2 L977.2 412.0 L956.2 405.5ZM1093.1 431.6 L1114.2 438.1 L1103.5 450.9 L1082.5 444.4ZM1114.2 438.1 L1135.2 444.5 L1124.6 457.4 L1103.5 450.9ZM1135.2 444.5 L1156.3 451.0 L1145.6 463.8 L1124.6 457.4ZM1156.3 451.0 L1177.3 457.5 L1166.6 470.3 L1145.6 463.8ZM956.2 405.5 L977.2 412.0 L966.6 424.8 L945.5 418.3ZM1145.6 463.8 L1166.6 470.3 L1156.0 483.1 L1134.9 476.7ZM1166.6 470.3 L1187.7 476.8 L1177.0 489.6 L1156.0 483.1ZM924.5 411.9 L945.5 418.3 L934.9 431.2 L913.8 424.7ZM945.5 418.3 L966.6 424.8 L955.9 437.6 L934.9 431.2ZM1156.0 483.1 L1177.0 489.6 L1166.4 502.4 L1145.3 496.0ZM913.8 424.7 L934.9 431.2 L924.2 444.0 L903.2 437.5ZM1145.3 496.0 L1166.4 502.4 L1155.7 515.3 L1134.7 508.8ZM903.2 437.5 L924.2 444.0 L913.6 456.8 L892.5 450.3ZM924.2 444.0 L945.3 450.5 L934.6 463.3 L913.6 456.8ZM1134.7 508.8 L1155.7 515.3 L1145.0 528.1 L1124.0 521.6ZM1155.7 515.3 L1176.7 521.7 L1166.1 534.6 L1145.0 528.1ZM1124.0 521.6 L1145.0 528.1 L1134.4 540.9 L1113.3 534.4ZM1145.0 528.1 L1166.1 534.6 L1155.4 547.4 L1134.4 540.9ZM1050.2 515.0 L1071.3 521.5 L1060.6 534.3 L1039.5 527.8ZM1113.3 534.4 L1134.4 540.9 L1123.7 553.7 L1102.7 547.2ZM1134.4 540.9 L1155.4 547.4 L1144.8 560.2 L1123.7 553.7ZM1039.5 527.8 L1060.6 534.3 L1049.9 547.1 L1028.9 540.6ZM1102.7 547.2 L1123.7 553.7 L1113.1 566.5 L1092.0 560.1ZM1123.7 553.7 L1144.8 560.2 L1134.1 573.0 L1113.1 566.5ZM1092.0 560.1 L1113.1 566.5 L1102.4 579.4 L1081.4 572.9ZM1113.1 566.5 L1134.1 573.0 L1123.4 585.8 L1102.4 579.4ZM849.9 501.6 L870.9 508.1 L860.3 520.9 L839.2 514.4ZM870.9 508.1 L892.0 514.6 L881.3 527.4 L860.3 520.9ZM1081.4 572.9 L1102.4 579.4 L1091.7 592.2 L1070.7 585.7ZM1102.4 579.4 L1123.4 585.8 L1112.8 598.7 L1091.7 592.2ZM839.2 514.4 L860.3 520.9 L849.6 533.7 L828.6 527.2ZM860.3 520.9 L881.3 527.4 L870.6 540.2 L849.6 533.7ZM1070.7 585.7 L1091.7 592.2 L1081.1 605.0 L1060.0 598.5ZM828.6 527.2 L849.6 533.7 L838.9 546.5 L817.9 540.1ZM849.6 533.7 L870.6 540.2 L860.0 553.0 L838.9 546.5ZM1060.0 598.5 L1081.1 605.0 L1070.4 617.8 L1049.4 611.3ZM817.9 540.1 L838.9 546.5 L828.3 559.4 L807.2 552.9ZM838.9 546.5 L860.0 553.0 L849.3 565.8 L828.3 559.4ZM1028.3 604.9 L1049.4 611.3 L1038.7 624.2 L1017.7 617.7ZM1049.4 611.3 L1070.4 617.8 L1059.8 630.6 L1038.7 624.2ZM807.2 552.9 L828.3 559.4 L817.6 572.2 L796.6 565.7ZM828.3 559.4 L849.3 565.8 L838.7 578.7 L817.6 572.2ZM891.4 578.8 L912.5 585.3 L901.8 598.1 L880.8 591.6ZM912.5 585.3 L933.5 591.8 L922.8 604.6 L901.8 598.1ZM975.6 604.7 L996.6 611.2 L986.0 624.0 L964.9 617.5ZM996.6 611.2 L1017.7 617.7 L1007.0 630.5 L986.0 624.0ZM1017.7 617.7 L1038.7 624.2 L1028.1 637.0 L1007.0 630.5ZM817.6 572.2 L838.7 578.7 L828.0 591.5 L807.0 585.0ZM838.7 578.7 L859.7 585.1 L849.1 598.0 L828.0 591.5ZM880.8 591.6 L901.8 598.1 L891.1 610.9 L870.1 604.4ZM901.8 598.1 L922.8 604.6 L912.2 617.4 L891.1 610.9ZM943.9 611.1 L964.9 617.5 L954.3 630.4 L933.2 623.9ZM964.9 617.5 L986.0 624.0 L975.3 636.8 L954.3 630.4ZM828.0 591.5 L849.1 598.0 L838.4 610.8 L817.4 604.3ZM849.1 598.0 L870.1 604.4 L859.4 617.3 L838.4 610.8ZM870.1 604.4 L891.1 610.9 L880.5 623.7 L859.4 617.3ZM891.1 610.9 L912.2 617.4 L901.5 630.2 L880.5 623.7ZM912.2 617.4 L933.2 623.9 L922.6 636.7 L901.5 630.2ZM933.2 623.9 L954.3 630.4 L943.6 643.2 L922.6 636.7Z" fill="#5ffbff" stroke="#5ffbff" stroke-width="0.6"/>
<path d="M987.9 399.2 L1009.0 405.7 L998.3 418.5 L977.2 412.0ZM1009.0 405.7 L1030.0 412.1 L1019.3 425.0 L998.3 418.5ZM1030.0 412.1 L1051.0 418.6 L1040.4 431.4 L1019.3 425.0ZM1051.0 418.6 L1072.1 425.1 L1061.4 437.9 L1040.4 431.4ZM1072.1 425.1 L1093.1 431.6 L1082.5 444.4 L1061.4 437.9ZM977.2 412.0 L998.3 418.5 L987.6 431.3 L966.6 424.8ZM1082.5 444.4 L1103.5 450.9 L1092.8 463.7 L1071.8 457.2ZM1103.5 450.9 L1124.6 457.4 L1113.9 470.2 L1092.8 463.7ZM1124.6 457.4 L1145.6 463.8 L1134.9 476.7 L1113.9 470.2ZM1092.8 463.7 L1113.9 470.2 L1103.2 483.0 L1082.2 476.5ZM1113.9 470.2 L1134.9 476.7 L1124.3 489.5 L1103.2 483.0ZM1134.9 476.7 L1156.0 483.1 L1145.3 496.0 L1124.3 489.5ZM934.9 431.2 L955.9 437.6 L945.3 450.5 L924.2 444.0ZM1103.2 483.0 L1124.3 489.5 L1113.6 502.3 L1092.6 495.8ZM1124.3 489.5 L1145.3 496.0 L1134.7 508.8 L1113.6 502.3ZM1071.5 489.3 L1092.6 495.8 L1081.9 508.6 L1060.9 502.2ZM1092.6 495.8 L1113.6 502.3 L1103.0 515.1 L1081.9 508.6ZM1113.6 502.3 L1134.7 508.8 L1124.0 521.6 L1103.0 515.1ZM1039.8 495.7 L1060.9 502.2 L1050.2 515.0 L1029.2 508.5ZM1060.9 502.2 L1081.9 508.6 L1071.3 521.5 L1050.2 515.0ZM1081.9 508.6 L1103.0 515.1 L1092.3 527.9 L1071.3 521.5ZM1103.0 515.1 L1124.0 521.6 L1113.3 534.4 L1092.3 527.9ZM1029.2 508.5 L1050.2 515.0 L1039.5 527.8 L1018.5 521.3ZM1071.3 521.5 L1092.3 527.9 L1081.6 540.8 L1060.6 534.3ZM1092.3 527.9 L1113.3 534.4 L1102.7 547.2 L1081.6 540.8ZM1018.5 521.3 L1039.5 527.8 L1028.9 540.6 L1007.8 534.1ZM1060.6 534.3 L1081.6 540.8 L1071.0 553.6 L1049.9 547.1ZM1081.6 540.8 L1102.7 547.2 L1092.0 560.1 L1071.0 553.6ZM1007.8 534.1 L1028.9 540.6 L1018.2 553.4 L997.2 547.0ZM1028.9 540.6 L1049.9 547.1 L1039.3 559.9 L1018.2 553.4ZM1049.9 547.1 L1071.0 553.6 L1060.3 566.4 L1039.3 559.9ZM1071.0 553.6 L1092.0 560.1 L1081.4 572.9 L1060.3 566.4ZM1018.2 553.4 L1039.3 559.9 L1028.6 572.7 L1007.6 566.3ZM1039.3 559.9 L1060.3 566.4 L1049.7 579.2 L1028.6 572.7ZM1060.3 566.4 L1081.4 572.9 L1070.7 585.7 L1049.7 579.2ZM1028.6 572.7 L1049.7 579.2 L1039.0 592.0 L1018.0 585.6ZM1049.7 579.2 L1070.7 585.7 L1060.0 598.5 L1039.0 592.0ZM996.9 579.1 L1018.0 585.6 L1007.3 598.4 L986.2 591.9ZM1018.0 585.6 L1039.0 592.0 L1028.3 604.9 L1007.3 598.4ZM1039.0 592.0 L1060.0 598.5 L1049.4 611.3 L1028.3 604.9ZM860.0 553.0 L881.0 559.5 L870.4 572.3 L849.3 565.8ZM965.2 585.4 L986.2 591.9 L975.6 604.7 L954.5 598.2ZM986.2 591.9 L1007.3 598.4 L996.6 611.2 L975.6 604.7ZM1007.3 598.4 L1028.3 604.9 L1017.7 617.7 L996.6 611.2ZM849.3 565.8 L870.4 572.3 L859.7 585.1 L838.7 578.7ZM870.4 572.3 L891.4 578.8 L880.8 591.6 L859.7 585.1ZM933.5 591.8 L954.5 598.2 L943.9 611.1 L922.8 604.6ZM954.5 598.2 L975.6 604.7 L964.9 617.5 L943.9 611.1ZM859.7 585.1 L880.8 591.6 L870.1 604.4 L849.1 598.0ZM922.8 604.6 L943.9 611.1 L933.2 623.9 L912.2 617.4Z" fill="#5ffb7b" stroke="#5ffb7b" stroke-width="0.6"/>
<path d="M998.3 418.5 L1019.3 425.0 L1008.7 437.8 L987.6 431.3ZM1019.3 425.0 L1040.4 431.4 L1029.7 444.3 L1008.7 437.8ZM1040.4 431.4 L1061.4 437.9 L1050.8 450.7 L1029.7 444.3ZM1061.4 437.9 L1082.5 444.4 L1071.8 457.2 L1050.8 450.7ZM881.0 559.5 L902.1 566.0 L891.4 578.8 L870.4 572.3ZM902.1 566.0 L923.1 572.5 L912.5 585.3 L891.4 578.8ZM923.1 572.5 L944.2 578.9 L933.5 591.8 L912.5 585.3ZM944.2 578.9 L965.2 585.4 L954.5 598.2 L933.5 591.8Z" fill="#88fa0c" stroke="#88fa0c" stroke-width="0.6"/>
<path d="M966.6 424.8 L987.6 431.3 L977.0 444.1 L955.9 437.6ZM1071.8 457.2 L1092.8 463.7 L1082.2 476.5 L1061.1 470.0ZM955.9 437.6 L977.0 444.1 L966.3 456.9 L945.3 450.5ZM1061.1 470.0 L1082.2 476.5 L1071.5 489.3 L1050.5 482.9ZM1082.2 476.5 L1103.2 483.0 L1092.6 495.8 L1071.5 489.3ZM945.3 450.5 L966.3 456.9 L955.7 469.8 L934.6 463.3ZM1050.5 482.9 L1071.5 489.3 L1060.9 502.2 L1039.8 495.7ZM934.6 463.3 L955.7 469.8 L945.0 482.6 L924.0 476.1ZM924.0 476.1 L945.0 482.6 L934.3 495.4 L913.3 488.9ZM913.3 488.9 L934.3 495.4 L923.7 508.2 L902.6 501.7ZM902.6 501.7 L923.7 508.2 L913.0 521.0 L892.0 514.6ZM892.0 514.6 L913.0 521.0 L902.4 533.9 L881.3 527.4ZM997.2 547.0 L1018.2 553.4 L1007.6 566.3 L986.5 559.8ZM881.3 527.4 L902.4 533.9 L891.7 546.7 L870.6 540.2ZM986.5 559.8 L1007.6 566.3 L996.9 579.1 L975.9 572.6ZM1007.6 566.3 L1028.6 572.7 L1018.0 585.6 L996.9 579.1ZM870.6 540.2 L891.7 546.7 L881.0 559.5 L860.0 553.0ZM975.9 572.6 L996.9 579.1 L986.2 591.9 L965.2 585.4Z" fill="#5cf806" stroke="#5cf806" stroke-width="0.6"/>
<path d="M987.6 431.3 L1008.7 437.8 L998.0 450.6 L977.0 444.1ZM1008.7 437.8 L1029.7 444.3 L1019.1 457.1 L998.0 450.6ZM1029.7 444.3 L1050.8 450.7 L1040.1 463.6 L1019.1 457.1ZM1050.8 450.7 L1071.8 457.2 L1061.1 470.0 L1040.1 463.6ZM1018.8 489.2 L1039.8 495.7 L1029.2 508.5 L1008.1 502.0ZM945.0 482.6 L966.0 489.1 L955.4 501.9 L934.3 495.4ZM1008.1 502.0 L1029.2 508.5 L1018.5 521.3 L997.5 514.8ZM934.3 495.4 L955.4 501.9 L944.7 514.7 L923.7 508.2ZM997.5 514.8 L1018.5 521.3 L1007.8 534.1 L986.8 527.7ZM986.8 527.7 L1007.8 534.1 L997.2 547.0 L976.1 540.5ZM891.7 546.7 L912.7 553.2 L902.1 566.0 L881.0 559.5ZM912.7 553.2 L933.8 559.6 L923.1 572.5 L902.1 566.0ZM933.8 559.6 L954.8 566.1 L944.2 578.9 L923.1 572.5ZM954.8 566.1 L975.9 572.6 L965.2 585.4 L944.2 578.9Z" fill="#ff7f0c" stroke="#ff7f0c" stroke-width="0.6"/>
<path d="M977.0 444.1 L998.0 450.6 L987.4 463.4 L966.3 456.9ZM998.0 450.6 L1019.1 457.1 L1008.4 469.9 L987.4 463.4ZM1019.1 457.1 L1040.1 463.6 L1029.4 476.4 L1008.4 469.9ZM1040.1 463.6 L1061.1 470.0 L1050.5 482.9 L1029.4 476.4ZM966.3 456.9 L987.4 463.4 L976.7 476.2 L955.7 469.8ZM987.4 463.4 L1008.4 469.9 L997.7 482.7 L976.7 476.2ZM1008.4 469.9 L1029.4 476.4 L1018.8 489.2 L997.7 482.7ZM1029.4 476.4 L1050.5 482.9 L1039.8 495.7 L1018.8 489.2ZM955.7 469.8 L976.7 476.2 L966.0 489.1 L945.0 482.6ZM976.7 476.2 L997.7 482.7 L987.1 495.5 L966.0 489.1ZM997.7 482.7 L1018.8 489.2 L1008.1 502.0 L987.1 495.5ZM966.0 489.1 L987.1 495.5 L976.4 508.4 L955.4 501.9ZM987.1 495.5 L1008.1 502.0 L997.5 514.8 L976.4 508.4ZM955.4 501.9 L976.4 508.4 L965.8 521.2 L944.7 514.7ZM976.4 508.4 L997.5 514.8 L986.8 527.7 L965.8 521.2ZM923.7 508.2 L944.7 514.7 L934.1 527.5 L913.0 521.0ZM944.7 514.7 L965.8 521.2 L955.1 534.0 L934.1 527.5ZM965.8 521.2 L986.8 527.7 L976.1 540.5 L955.1 534.0ZM913.0 521.0 L934.1 527.5 L923.4 540.3 L902.4 533.9ZM934.1 527.5 L955.1 534.0 L944.4 546.8 L923.4 540.3ZM955.1 534.0 L976.1 540.5 L965.5 553.3 L944.4 546.8ZM976.1 540.5 L997.2 547.0 L986.5 559.8 L965.5 553.3ZM902.4 533.9 L923.4 540.3 L912.7 553.2 L891.7 546.7ZM923.4 540.3 L944.4 546.8 L933.8 559.6 L912.7 553.2ZM944.4 546.8 L965.5 553.3 L954.8 566.1 L933.8 559.6ZM965.5 553.3 L986.5 559.8 L975.9 572.6 L954.8 566.1Z" fill="#f90f05" stroke="#f90f05" stroke-width="0.6"/>
<path d="M946.1 354.1 L967.1 360.6M967.1 360.6 L988.2 367.1M988.2 367.1 L1009.2 373.5M1009.2 373.5 L1030.3 380.0M1030.3 380.0 L1051.3 386.5M1051.3 386.5 L1072.4 393.0M1072.4 393.0 L1093.4 399.5M1093.4 399.5 L1114.4 405.9M1114.4 405.9 L1135.5 412.4M1135.5 412.4 L1156.5 418.9M1156.5 418.9 L1177.6 425.4M1177.6 425.4 L1198.6 431.9M1198.6 431.9 L1219.7 438.3M935.4 366.9 L956.5 373.4M956.5 373.4 L977.5 379.9M977.5 379.9 L998.6 386.4M1040.7 399.3 L1061.7 405.8M1061.7 405.8 L1082.7 412.3M1124.8 425.2 L1145.9 431.7M1145.9 431.7 L1166.9 438.2M1166.9 438.2 L1188.0 444.7M1188.0 444.7 L1209.0 451.2M924.8 379.7 L945.8 386.2M945.8 386.2 L966.9 392.7M1177.3 457.5 L1198.3 464.0M914.1 392.6 L935.2 399.0M935.2 399.0 L956.2 405.5M1187.7 476.8 L1208.7 483.3M903.5 405.4 L924.5 411.9M1177.0 489.6 L1198.1 496.1M892.8 418.2 L913.8 424.7M1166.4 502.4 L1187.4 508.9M1187.4 508.9 L1208.5 515.4M882.1 431.0 L903.2 437.5M1176.7 521.7 L1197.8 528.2M871.5 443.8 L892.5 450.3M1166.1 534.6 L1187.1 541.0M860.8 456.7 L881.9 463.1M881.9 463.1 L902.9 469.6M902.9 469.6 L924.0 476.1M1155.4 547.4 L1176.5 553.9M850.2 469.5 L871.2 476.0M871.2 476.0 L892.2 482.4M892.2 482.4 L913.3 488.9M1144.8 560.2 L1165.8 566.7M839.5 482.3 L860.5 488.8M860.5 488.8 L881.6 495.3M881.6 495.3 L902.6 501.7M1134.1 573.0 L1155.2 579.5M828.8 495.1 L849.9 501.6M1123.4 585.8 L1144.5 592.3M818.2 507.9 L839.2 514.4M1112.8 598.7 L1133.8 605.1M807.5 520.8 L828.6 527.2M1081.1 605.0 L1102.1 611.5M1102.1 611.5 L1123.2 618.0M796.9 533.6 L817.9 540.1M1070.4 617.8 L1091.5 624.3M786.2 546.4 L807.2 552.9M1059.8 630.6 L1080.8 637.1M775.5 559.2 L796.6 565.7M1028.1 637.0 L1049.1 643.5M764.9 572.0 L785.9 578.5M785.9 578.5 L807.0 585.0M975.3 636.8 L996.4 643.3M996.4 643.3 L1017.4 649.8M775.3 591.3 L796.3 597.8M796.3 597.8 L817.4 604.3M943.6 643.2 L964.7 649.7M946.1 354.1 L935.4 366.9M935.4 366.9 L924.8 379.7M924.8 379.7 L914.1 392.6M914.1 392.6 L903.5 405.4M903.5 405.4 L892.8 418.2M892.8 418.2 L882.1 431.0M882.1 431.0 L871.5 443.8M871.5 443.8 L860.8 456.7M860.8 456.7 L850.2 469.5M850.2 469.5 L839.5 482.3M839.5 482.3 L828.8 495.1M828.8 495.1 L818.2 507.9M818.2 507.9 L807.5 520.8M807.5 520.8 L796.9 533.6M796.9 533.6 L786.2 546.4M786.2 546.4 L775.5 559.2M775.5 559.2 L764.9 572.0M764.9 572.0 L754.2 584.9M967.1 360.6 L956.5 373.4M956.5 373.4 L945.8 386.2M945.8 386.2 L935.2 399.0M935.2 399.0 L924.5 411.9M892.5 450.3 L881.9 463.1M881.9 463.1 L871.2 476.0M871.2 476.0 L860.5 488.8M860.5 488.8 L849.9 501.6M796.6 565.7 L785.9 578.5M785.9 578.5 L775.3 591.3M988.2 367.1 L977.5 379.9M977.5 379.9 L966.9 392.7M913.6 456.8 L902.9 469.6M902.9 469.6 L892.2 482.4M892.2 482.4 L881.6 495.3M881.6 495.3 L870.9 508.1M807.0 585.0 L796.3 597.8M796.3 597.8 L785.6 610.6M1009.2 373.5 L998.6 386.4M817.4 604.3 L806.7 617.1M1030.3 380.0 L1019.6 392.8M838.4 610.8 L827.7 623.6M1051.3 386.5 L1040.7 399.3M859.4 617.3 L848.8 630.1M1072.4 393.0 L1061.7 405.8M1061.7 405.8 L1051.0 418.6M880.5 623.7 L869.8 636.6M1093.4 399.5 L1082.7 412.3M901.5 630.2 L890.9 643.0M1114.4 405.9 L1103.8 418.8M922.6 636.7 L911.9 649.5M1135.5 412.4 L1124.8 425.2M943.6 643.2 L932.9 656.0M1156.5 418.9 L1145.9 431.7M1145.9 431.7 L1135.2 444.5M975.3 636.8 L964.7 649.7M1177.6 425.4 L1166.9 438.2M1166.9 438.2 L1156.3 451.0M1007.0 630.5 L996.4 643.3M996.4 643.3 L985.7 656.1M1198.6 431.9 L1188.0 444.7M1188.0 444.7 L1177.3 457.5M1028.1 637.0 L1017.4 649.8M1198.3 464.0 L1187.7 476.8M1059.8 630.6 L1049.1 643.5M1198.1 496.1 L1187.4 508.9M1187.4 508.9 L1176.7 521.7M1112.8 598.7 L1102.1 611.5M1102.1 611.5 L1091.5 624.3" fill="none" stroke="#0c48c3" stroke-width="1.4"/>
<path d="M1219.7 438.3 L1240.7 444.8M1240.7 444.8 L1261.8 451.3M1261.8 451.3 L1282.8 457.8M1282.8 457.8 L1303.8 464.3M1303.8 464.3 L1324.9 470.7M1324.9 470.7 L1345.9 477.2M1345.9 477.2 L1367.0 483.7M1367.0 483.7 L1388.0 490.2M1388.0 490.2 L1409.1 496.7M1409.1 496.7 L1430.1 503.1M1430.1 503.1 L1451.1 509.6M1451.1 509.6 L1472.2 516.1M1472.2 516.1 L1493.2 522.6M1493.2 522.6 L1514.3 529.1M1514.3 529.1 L1535.3 535.5M1535.3 535.5 L1556.4 542.0M1556.4 542.0 L1577.4 548.5M1209.0 451.2 L1230.0 457.6M1230.0 457.6 L1251.1 464.1M1251.1 464.1 L1272.1 470.6M1272.1 470.6 L1293.2 477.1M1293.2 477.1 L1314.2 483.6M1314.2 483.6 L1335.3 490.0M1335.3 490.0 L1356.3 496.5M1356.3 496.5 L1377.4 503.0M1377.4 503.0 L1398.4 509.5M1398.4 509.5 L1419.4 516.0M1419.4 516.0 L1440.5 522.4M1440.5 522.4 L1461.5 528.9M1461.5 528.9 L1482.6 535.4M1482.6 535.4 L1503.6 541.9M1503.6 541.9 L1524.7 548.4M1524.7 548.4 L1545.7 554.8M1545.7 554.8 L1566.7 561.3M1219.4 470.5 L1240.4 476.9M1240.4 476.9 L1261.5 483.4M1261.5 483.4 L1282.5 489.9M1282.5 489.9 L1303.6 496.4M1303.6 496.4 L1324.6 502.9M1324.6 502.9 L1345.6 509.3M1345.6 509.3 L1366.7 515.8M1366.7 515.8 L1387.7 522.3M1387.7 522.3 L1408.8 528.8M1408.8 528.8 L1429.8 535.3M1429.8 535.3 L1450.9 541.7M1450.9 541.7 L1471.9 548.2M1471.9 548.2 L1493.0 554.7M1493.0 554.7 L1514.0 561.2M1514.0 561.2 L1535.0 567.7M1535.0 567.7 L1556.1 574.1M1208.7 483.3 L1229.8 489.8M1229.8 489.8 L1250.8 496.2M1250.8 496.2 L1271.9 502.7M1271.9 502.7 L1292.9 509.2M1292.9 509.2 L1313.9 515.7M1313.9 515.7 L1335.0 522.2M1335.0 522.2 L1356.0 528.6M1356.0 528.6 L1377.1 535.1M1377.1 535.1 L1398.1 541.6M1398.1 541.6 L1419.2 548.1M1419.2 548.1 L1440.2 554.6M1440.2 554.6 L1461.2 561.0M1461.2 561.0 L1482.3 567.5M1482.3 567.5 L1503.3 574.0M1503.3 574.0 L1524.4 580.5M1524.4 580.5 L1545.4 587.0M1219.1 502.6 L1240.2 509.1M1240.2 509.1 L1261.2 515.5M1261.2 515.5 L1282.2 522.0M1282.2 522.0 L1303.3 528.5M1303.3 528.5 L1324.3 535.0M1324.3 535.0 L1345.4 541.5M1345.4 541.5 L1366.4 547.9M1366.4 547.9 L1387.5 554.4M1387.5 554.4 L1408.5 560.9M1408.5 560.9 L1429.5 567.4M1429.5 567.4 L1450.6 573.9M1450.6 573.9 L1471.6 580.3M1471.6 580.3 L1492.7 586.8M1492.7 586.8 L1513.7 593.3M1513.7 593.3 L1534.8 599.8M1208.5 515.4 L1229.5 521.9M1229.5 521.9 L1250.5 528.4M1250.5 528.4 L1271.6 534.8M1271.6 534.8 L1292.6 541.3M1292.6 541.3 L1313.7 547.8M1313.7 547.8 L1334.7 554.3M1334.7 554.3 L1355.8 560.8M1355.8 560.8 L1376.8 567.2M1376.8 567.2 L1397.8 573.7M1397.8 573.7 L1418.9 580.2M1418.9 580.2 L1439.9 586.7M1439.9 586.7 L1461.0 593.2M1461.0 593.2 L1482.0 599.6M1482.0 599.6 L1503.1 606.1M1503.1 606.1 L1524.1 612.6M1197.8 528.2 L1218.8 534.7M1218.8 534.7 L1239.9 541.2M1239.9 541.2 L1260.9 547.7M1260.9 547.7 L1282.0 554.1M1282.0 554.1 L1303.0 560.6M1303.0 560.6 L1324.1 567.1M1324.1 567.1 L1345.1 573.6M1345.1 573.6 L1366.1 580.1M1366.1 580.1 L1387.2 586.5M1387.2 586.5 L1408.2 593.0M1408.2 593.0 L1429.3 599.5M1429.3 599.5 L1450.3 606.0M1450.3 606.0 L1471.4 612.5M1471.4 612.5 L1492.4 618.9M1492.4 618.9 L1513.4 625.4M1187.1 541.0 L1208.2 547.5M1208.2 547.5 L1229.2 554.0M1229.2 554.0 L1250.3 560.5M1250.3 560.5 L1271.3 567.0M1271.3 567.0 L1292.3 573.4M1292.3 573.4 L1313.4 579.9M1313.4 579.9 L1334.4 586.4M1334.4 586.4 L1355.5 592.9M1355.5 592.9 L1376.5 599.4M1376.5 599.4 L1397.6 605.8M1397.6 605.8 L1418.6 612.3M1418.6 612.3 L1439.6 618.8M1439.6 618.8 L1460.7 625.3M1460.7 625.3 L1481.7 631.8M1481.7 631.8 L1502.8 638.2M1176.5 553.9 L1197.5 560.3M1197.5 560.3 L1218.6 566.8M1218.6 566.8 L1239.6 573.3M1239.6 573.3 L1260.6 579.8M1260.6 579.8 L1281.7 586.3M1281.7 586.3 L1302.7 592.7M1302.7 592.7 L1323.8 599.2M1323.8 599.2 L1344.8 605.7M1344.8 605.7 L1365.9 612.2M1365.9 612.2 L1386.9 618.7M1386.9 618.7 L1407.9 625.1M1407.9 625.1 L1429.0 631.6M1429.0 631.6 L1450.0 638.1M1450.0 638.1 L1471.1 644.6M1471.1 644.6 L1492.1 651.1M1165.8 566.7 L1186.9 573.2M1186.9 573.2 L1207.9 579.6M1207.9 579.6 L1228.9 586.1M1228.9 586.1 L1250.0 592.6M1250.0 592.6 L1271.0 599.1M1271.0 599.1 L1292.1 605.6M1292.1 605.6 L1313.1 612.0M1313.1 612.0 L1334.2 618.5M1334.2 618.5 L1355.2 625.0M1355.2 625.0 L1376.2 631.5M1376.2 631.5 L1397.3 638.0M1397.3 638.0 L1418.3 644.4M1418.3 644.4 L1439.4 650.9M1439.4 650.9 L1460.4 657.4M1460.4 657.4 L1481.5 663.9M1155.2 579.5 L1176.2 586.0M1176.2 586.0 L1197.2 592.5M1197.2 592.5 L1218.3 598.9M1218.3 598.9 L1239.3 605.4M1239.3 605.4 L1260.4 611.9M1260.4 611.9 L1281.4 618.4M1281.4 618.4 L1302.5 624.9M1302.5 624.9 L1323.5 631.3M1323.5 631.3 L1344.5 637.8M1344.5 637.8 L1365.6 644.3M1365.6 644.3 L1386.6 650.8M1386.6 650.8 L1407.7 657.3M1407.7 657.3 L1428.7 663.7M1428.7 663.7 L1449.8 670.2M1449.8 670.2 L1470.8 676.7M1144.5 592.3 L1165.5 598.8M1165.5 598.8 L1186.6 605.3M1186.6 605.3 L1207.6 611.8M1207.6 611.8 L1228.7 618.2M1228.7 618.2 L1249.7 624.7M1249.7 624.7 L1270.8 631.2M1270.8 631.2 L1291.8 637.7M1291.8 637.7 L1312.8 644.2M1312.8 644.2 L1333.9 650.6M1333.9 650.6 L1354.9 657.1M1354.9 657.1 L1376.0 663.6M1376.0 663.6 L1397.0 670.1M1397.0 670.1 L1418.1 676.6M1418.1 676.6 L1439.1 683.0M1439.1 683.0 L1460.1 689.5M1133.8 605.1 L1154.9 611.6M1154.9 611.6 L1175.9 618.1M1175.9 618.1 L1197.0 624.6M1197.0 624.6 L1218.0 631.1M1218.0 631.1 L1239.0 637.5M1239.0 637.5 L1260.1 644.0M1260.1 644.0 L1281.1 650.5M1281.1 650.5 L1302.2 657.0M1302.2 657.0 L1323.2 663.5M1323.2 663.5 L1344.3 669.9M1344.3 669.9 L1365.3 676.4M1365.3 676.4 L1386.3 682.9M1386.3 682.9 L1407.4 689.4M1407.4 689.4 L1428.4 695.9M1428.4 695.9 L1449.5 702.3M1123.2 618.0 L1144.2 624.4M1144.2 624.4 L1165.3 630.9M1165.3 630.9 L1186.3 637.4M1186.3 637.4 L1207.3 643.9M1207.3 643.9 L1228.4 650.4M1228.4 650.4 L1249.4 656.8M1249.4 656.8 L1270.5 663.3M1270.5 663.3 L1291.5 669.8M1291.5 669.8 L1312.6 676.3M1312.6 676.3 L1333.6 682.8M1333.6 682.8 L1354.6 689.2M1354.6 689.2 L1375.7 695.7M1375.7 695.7 L1396.7 702.2M1396.7 702.2 L1417.8 708.7M1417.8 708.7 L1438.8 715.2M1112.5 630.8 L1133.6 637.3M1133.6 637.3 L1154.6 643.7M1154.6 643.7 L1175.6 650.2M1175.6 650.2 L1196.7 656.7M1196.7 656.7 L1217.7 663.2M1217.7 663.2 L1238.8 669.7M1238.8 669.7 L1259.8 676.1M1259.8 676.1 L1280.9 682.6M1280.9 682.6 L1301.9 689.1M1301.9 689.1 L1322.9 695.6M1322.9 695.6 L1344.0 702.1M1344.0 702.1 L1365.0 708.5M1365.0 708.5 L1386.1 715.0M1386.1 715.0 L1407.1 721.5M1407.1 721.5 L1428.2 728.0M1080.8 637.1 L1101.8 643.6M1101.8 643.6 L1122.9 650.1M1122.9 650.1 L1143.9 656.6M1143.9 656.6 L1165.0 663.0M1165.0 663.0 L1186.0 669.5M1186.0 669.5 L1207.1 676.0M1207.1 676.0 L1228.1 682.5M1228.1 682.5 L1249.2 689.0M1249.2 689.0 L1270.2 695.4M1270.2 695.4 L1291.2 701.9M1291.2 701.9 L1312.3 708.4M1312.3 708.4 L1333.3 714.9M1333.3 714.9 L1354.4 721.4M1354.4 721.4 L1375.4 727.8M1375.4 727.8 L1396.5 734.3M1396.5 734.3 L1417.5 740.8M1070.1 649.9 L1091.2 656.4M1091.2 656.4 L1112.2 662.9M1112.2 662.9 L1133.3 669.4M1133.3 669.4 L1154.3 675.9M1154.3 675.9 L1175.4 682.3M1175.4 682.3 L1196.4 688.8M1196.4 688.8 L1217.5 695.3M1217.5 695.3 L1238.5 701.8M1238.5 701.8 L1259.5 708.3M1259.5 708.3 L1280.6 714.7M1280.6 714.7 L1301.6 721.2M1301.6 721.2 L1322.7 727.7M1322.7 727.7 L1343.7 734.2M1343.7 734.2 L1364.8 740.7M1364.8 740.7 L1385.8 747.1M1385.8 747.1 L1406.8 753.6M1038.4 656.3 L1059.5 662.8M1059.5 662.8 L1080.5 669.2M1080.5 669.2 L1101.6 675.7M1101.6 675.7 L1122.6 682.2M1122.6 682.2 L1143.7 688.7M1143.7 688.7 L1164.7 695.2M1164.7 695.2 L1185.7 701.6M1185.7 701.6 L1206.8 708.1M1206.8 708.1 L1227.8 714.6M1227.8 714.6 L1248.9 721.1M1248.9 721.1 L1269.9 727.6M1269.9 727.6 L1291.0 734.0M1291.0 734.0 L1312.0 740.5M1312.0 740.5 L1333.0 747.0M1333.0 747.0 L1354.1 753.5M1354.1 753.5 L1375.1 760.0M1375.1 760.0 L1396.2 766.4M1006.7 662.6 L1027.8 669.1M1027.8 669.1 L1048.8 675.6M1048.8 675.6 L1069.9 682.1M1069.9 682.1 L1090.9 688.5M1090.9 688.5 L1112.0 695.0M1112.0 695.0 L1133.0 701.5M1133.0 701.5 L1154.0 708.0M1154.0 708.0 L1175.1 714.5M1175.1 714.5 L1196.1 720.9M1196.1 720.9 L1217.2 727.4M1217.2 727.4 L1238.2 733.9M1238.2 733.9 L1259.3 740.4M1259.3 740.4 L1280.3 746.9M1280.3 746.9 L1301.3 753.3M1301.3 753.3 L1322.4 759.8M1322.4 759.8 L1343.4 766.3M1343.4 766.3 L1364.5 772.8M1364.5 772.8 L1385.5 779.3M743.6 597.7 L764.6 604.2M954.0 662.5 L975.0 669.0M975.0 669.0 L996.1 675.4M996.1 675.4 L1017.1 681.9M1017.1 681.9 L1038.2 688.4M1038.2 688.4 L1059.2 694.9M1059.2 694.9 L1080.3 701.4M1080.3 701.4 L1101.3 707.8M1101.3 707.8 L1122.3 714.3M1122.3 714.3 L1143.4 720.8M1143.4 720.8 L1164.4 727.3M1164.4 727.3 L1185.5 733.8M1185.5 733.8 L1206.5 740.2M1206.5 740.2 L1227.6 746.7M1227.6 746.7 L1248.6 753.2M1248.6 753.2 L1269.6 759.7M1269.6 759.7 L1290.7 766.2M1290.7 766.2 L1311.7 772.6M1311.7 772.6 L1332.8 779.1M1332.8 779.1 L1353.8 785.6M1353.8 785.6 L1374.9 792.1M732.9 610.5 L753.9 617.0M753.9 617.0 L775.0 623.5M775.0 623.5 L796.0 629.9M796.0 629.9 L817.1 636.4M817.1 636.4 L838.1 642.9M838.1 642.9 L859.2 649.4M859.2 649.4 L880.2 655.9M880.2 655.9 L901.2 662.3M901.2 662.3 L922.3 668.8M922.3 668.8 L943.3 675.3M943.3 675.3 L964.4 681.8M964.4 681.8 L985.4 688.3M985.4 688.3 L1006.5 694.7M1006.5 694.7 L1027.5 701.2M1027.5 701.2 L1048.5 707.7M1048.5 707.7 L1069.6 714.2M1069.6 714.2 L1090.6 720.7M1090.6 720.7 L1111.7 727.1M1111.7 727.1 L1132.7 733.6M1132.7 733.6 L1153.8 740.1M1153.8 740.1 L1174.8 746.6M1174.8 746.6 L1195.9 753.1M1195.9 753.1 L1216.9 759.5M1216.9 759.5 L1237.9 766.0M1237.9 766.0 L1259.0 772.5M1259.0 772.5 L1280.0 779.0M1280.0 779.0 L1301.1 785.5M1301.1 785.5 L1322.1 791.9M1322.1 791.9 L1343.2 798.4M1343.2 798.4 L1364.2 804.9M754.2 584.9 L743.6 597.7M743.6 597.7 L732.9 610.5M764.6 604.2 L753.9 617.0M785.6 610.6 L775.0 623.5M806.7 617.1 L796.0 629.9M827.7 623.6 L817.1 636.4M848.8 630.1 L838.1 642.9M869.8 636.6 L859.2 649.4M890.9 643.0 L880.2 655.9M911.9 649.5 L901.2 662.3M932.9 656.0 L922.3 668.8M954.0 662.5 L943.3 675.3M985.7 656.1 L975.0 669.0M975.0 669.0 L964.4 681.8M1006.7 662.6 L996.1 675.4M996.1 675.4 L985.4 688.3M1038.4 656.3 L1027.8 669.1M1027.8 669.1 L1017.1 681.9M1017.1 681.9 L1006.5 694.7M1240.7 444.8 L1230.0 457.6M1230.0 457.6 L1219.4 470.5M1070.1 649.9 L1059.5 662.8M1059.5 662.8 L1048.8 675.6M1048.8 675.6 L1038.2 688.4M1038.2 688.4 L1027.5 701.2M1261.8 451.3 L1251.1 464.1M1251.1 464.1 L1240.4 476.9M1240.4 476.9 L1229.8 489.8M1229.8 489.8 L1219.1 502.6M1112.5 630.8 L1101.8 643.6M1101.8 643.6 L1091.2 656.4M1091.2 656.4 L1080.5 669.2M1080.5 669.2 L1069.9 682.1M1069.9 682.1 L1059.2 694.9M1059.2 694.9 L1048.5 707.7M1282.8 457.8 L1272.1 470.6M1272.1 470.6 L1261.5 483.4M1261.5 483.4 L1250.8 496.2M1250.8 496.2 L1240.2 509.1M1240.2 509.1 L1229.5 521.9M1229.5 521.9 L1218.8 534.7M1218.8 534.7 L1208.2 547.5M1208.2 547.5 L1197.5 560.3M1197.5 560.3 L1186.9 573.2M1186.9 573.2 L1176.2 586.0M1176.2 586.0 L1165.5 598.8M1165.5 598.8 L1154.9 611.6M1154.9 611.6 L1144.2 624.4M1144.2 624.4 L1133.6 637.3M1133.6 637.3 L1122.9 650.1M1122.9 650.1 L1112.2 662.9M1112.2 662.9 L1101.6 675.7M1101.6 675.7 L1090.9 688.5M1090.9 688.5 L1080.3 701.4M1080.3 701.4 L1069.6 714.2M1303.8 464.3 L1293.2 477.1M1293.2 477.1 L1282.5 489.9M1282.5 489.9 L1271.9 502.7M1271.9 502.7 L1261.2 515.5M1261.2 515.5 L1250.5 528.4M1250.5 528.4 L1239.9 541.2M1239.9 541.2 L1229.2 554.0M1229.2 554.0 L1218.6 566.8M1218.6 566.8 L1207.9 579.6M1207.9 579.6 L1197.2 592.5M1197.2 592.5 L1186.6 605.3M1186.6 605.3 L1175.9 618.1M1175.9 618.1 L1165.3 630.9M1165.3 630.9 L1154.6 643.7M1154.6 643.7 L1143.9 656.6M1143.9 656.6 L1133.3 669.4M1133.3 669.4 L1122.6 682.2M1122.6 682.2 L1112.0 695.0M1112.0 695.0 L1101.3 707.8M1101.3 707.8 L1090.6 720.7M1324.9 470.7 L1314.2 483.6M1314.2 483.6 L1303.6 496.4M1303.6 496.4 L1292.9 509.2M1292.9 509.2 L1282.2 522.0M1282.2 522.0 L1271.6 534.8M1271.6 534.8 L1260.9 547.7M1260.9 547.7 L1250.3 560.5M1250.3 560.5 L1239.6 573.3M1239.6 573.3 L1228.9 586.1M1228.9 586.1 L1218.3 598.9M1218.3 598.9 L1207.6 611.8M1207.6 611.8 L1197.0 624.6M1197.0 624.6 L1186.3 637.4M1186.3 637.4 L1175.6 650.2M1175.6 650.2 L1165.0 663.0M1165.0 663.0 L1154.3 675.9M1154.3 675.9 L1143.7 688.7M1143.7 688.7 L1133.0 701.5M1133.0 701.5 L1122.3 714.3M1122.3 714.3 L1111.7 727.1M1345.9 477.2 L1335.3 490.0M1335.3 490.0 L1324.6 502.9M1324.6 502.9 L1313.9 515.7M1313.9 515.7 L1303.3 528.5M1303.3 528.5 L1292.6 541.3M1292.6 541.3 L1282.0 554.1M1282.0 554.1 L1271.3 567.0M1271.3 567.0 L1260.6 579.8M1260.6 579.8 L1250.0 592.6M1250.0 592.6 L1239.3 605.4M1239.3 605.4 L1228.7 618.2M1228.7 618.2 L1218.0 631.1M1218.0 631.1 L1207.3 643.9M1207.3 643.9 L1196.7 656.7M1196.7 656.7 L1186.0 669.5M1186.0 669.5 L1175.4 682.3M1175.4 682.3 L1164.7 695.2M1164.7 695.2 L1154.0 708.0M1154.0 708.0 L1143.4 720.8M1143.4 720.8 L1132.7 733.6M1367.0 483.7 L1356.3 496.5M1356.3 496.5 L1345.6 509.3M1345.6 509.3 L1335.0 522.2M1335.0 522.2 L1324.3 535.0M1324.3 535.0 L1313.7 547.8M1313.7 547.8 L1303.0 560.6M1303.0 560.6 L1292.3 573.4M1292.3 573.4 L1281.7 586.3M1281.7 586.3 L1271.0 599.1M1271.0 599.1 L1260.4 611.9M1260.4 611.9 L1249.7 624.7M1249.7 624.7 L1239.0 637.5M1239.0 637.5 L1228.4 650.4M1228.4 650.4 L1217.7 663.2M1217.7 663.2 L1207.1 676.0M1207.1 676.0 L1196.4 688.8M1196.4 688.8 L1185.7 701.6M1185.7 701.6 L1175.1 714.5M1175.1 714.5 L1164.4 727.3M1164.4 727.3 L1153.8 740.1M1388.0 490.2 L1377.4 503.0M1377.4 503.0 L1366.7 515.8M1366.7 515.8 L1356.0 528.6M1356.0 528.6 L1345.4 541.5M1345.4 541.5 L1334.7 554.3M1334.7 554.3 L1324.1 567.1M1324.1 567.1 L1313.4 579.9M1313.4 579.9 L1302.7 592.7M1302.7 592.7 L1292.1 605.6M1292.1 605.6 L1281.4 618.4M1281.4 618.4 L1270.8 631.2M1270.8 631.2 L1260.1 644.0M1260.1 644.0 L1249.4 656.8M1249.4 656.8 L1238.8 669.7M1238.8 669.7 L1228.1 682.5M1228.1 682.5 L1217.5 695.3M1217.5 695.3 L1206.8 708.1M1206.8 708.1 L1196.1 720.9M1196.1 720.9 L1185.5 733.8M1185.5 733.8 L1174.8 746.6M1409.1 496.7 L1398.4 509.5M1398.4 509.5 L1387.7 522.3M1387.7 522.3 L1377.1 535.1M1377.1 535.1 L1366.4 547.9M1366.4 547.9 L1355.8 560.8M1355.8 560.8 L1345.1 573.6M1345.1 573.6 L1334.4 586.4M1334.4 586.4 L1323.8 599.2M1323.8 599.2 L1313.1 612.0M1313.1 612.0 L1302.5 624.9M1302.5 624.9 L1291.8 637.7M1291.8 637.7 L1281.1 650.5M1281.1 650.5 L1270.5 663.3M1270.5 663.3 L1259.8 676.1M1259.8 676.1 L1249.2 689.0M1249.2 689.0 L1238.5 701.8M1238.5 701.8 L1227.8 714.6M1227.8 714.6 L1217.2 727.4M1217.2 727.4 L1206.5 740.2M1206.5 740.2 L1195.9 753.1M1430.1 503.1 L1419.4 516.0M1419.4 516.0 L1408.8 528.8M1408.8 528.8 L1398.1 541.6M1398.1 541.6 L1387.5 554.4M1387.5 554.4 L1376.8 567.2M1376.8 567.2 L1366.1 580.1M1366.1 580.1 L1355.5 592.9M1355.5 592.9 L1344.8 605.7M1344.8 605.7 L1334.2 618.5M1334.2 618.5 L1323.5 631.3M1323.5 631.3 L1312.8 644.2M1312.8 644.2 L1302.2 657.0M1302.2 657.0 L1291.5 669.8M1291.5 669.8 L1280.9 682.6M1280.9 682.6 L1270.2 695.4M1270.2 695.4 L1259.5 708.3M1259.5 708.3 L1248.9 721.1M1248.9 721.1 L1238.2 733.9M1238.2 733.9 L1227.6 746.7M1227.6 746.7 L1216.9 759.5M1451.1 509.6 L1440.5 522.4M1440.5 522.4 L1429.8 535.3M1429.8 535.3 L1419.2 548.1M1419.2 548.1 L1408.5 560.9M1408.5 560.9 L1397.8 573.7M1397.8 573.7 L1387.2 586.5M1387.2 586.5 L1376.5 599.4M1376.5 599.4 L1365.9 612.2M1365.9 612.2 L1355.2 625.0M1355.2 625.0 L1344.5 637.8M1344.5 637.8 L1333.9 650.6M1333.9 650.6 L1323.2 663.5M1323.2 663.5 L1312.6 676.3M1312.6 676.3 L1301.9 689.1M1301.9 689.1 L1291.2 701.9M1291.2 701.9 L1280.6 714.7M1280.6 714.7 L1269.9 727.6M1269.9 727.6 L1259.3 740.4M1259.3 740.4 L1248.6 753.2M1248.6 753.2 L1237.9 766.0M1472.2 516.1 L1461.5 528.9M1461.5 528.9 L1450.9 541.7M1450.9 541.7 L1440.2 554.6M1440.2 554.6 L1429.5 567.4M1429.5 567.4 L1418.9 580.2M1418.9 580.2 L1408.2 593.0M1408.2 593.0 L1397.6 605.8M1397.6 605.8 L1386.9 618.7M1386.9 618.7 L1376.2 631.5M1376.2 631.5 L1365.6 644.3M1365.6 644.3 L1354.9 657.1M1354.9 657.1 L1344.3 669.9M1344.3 669.9 L1333.6 682.8M1333.6 682.8 L1322.9 695.6M1322.9 695.6 L1312.3 708.4M1312.3 708.4 L1301.6 721.2M1301.6 721.2 L1291.0 734.0M1291.0 734.0 L1280.3 746.9M1280.3 746.9 L1269.6 759.7M1269.6 759.7 L1259.0 772.5M1493.2 522.6 L1482.6 535.4M1482.6 535.4 L1471.9 548.2M1471.9 548.2 L1461.2 561.0M1461.2 561.0 L1450.6 573.9M1450.6 573.9 L1439.9 586.7M1439.9 586.7 L1429.3 599.5M1429.3 599.5 L1418.6 612.3M1418.6 612.3 L1407.9 625.1M1407.9 625.1 L1397.3 638.0M1397.3 638.0 L1386.6 650.8M1386.6 650.8 L1376.0 663.6M1376.0 663.6 L1365.3 676.4M1365.3 676.4 L1354.6 689.2M1354.6 689.2 L1344.0 702.1M1344.0 702.1 L1333.3 714.9M1333.3 714.9 L1322.7 727.7M1322.7 727.7 L1312.0 740.5M1312.0 740.5 L1301.3 753.3M1301.3 753.3 L1290.7 766.2M1290.7 766.2 L1280.0 779.0M1514.3 529.1 L1503.6 541.9M1503.6 541.9 L1493.0 554.7M1493.0 554.7 L1482.3 567.5M1482.3 567.5 L1471.6 580.3M1471.6 580.3 L1461.0 593.2M1461.0 593.2 L1450.3 606.0M1450.3 606.0 L1439.6 618.8M1439.6 618.8 L1429.0 631.6M1429.0 631.6 L1418.3 644.4M1418.3 644.4 L1407.7 657.3M1407.7 657.3 L1397.0 670.1M1397.0 670.1 L1386.3 682.9M1386.3 682.9 L1375.7 695.7M1375.7 695.7 L1365.0 708.5M1365.0 708.5 L1354.4 721.4M1354.4 721.4 L1343.7 734.2M1343.7 734.2 L1333.0 747.0M1333.0 747.0 L1322.4 759.8M1322.4 759.8 L1311.7 772.6M1311.7 772.6 L1301.1 785.5M1535.3 535.5 L1524.7 548.4M1524.7 548.4 L1514.0 561.2M1514.0 561.2 L1503.3 574.0M1503.3 574.0 L1492.7 586.8M1492.7 586.8 L1482.0 599.6M1482.0 599.6 L1471.4 612.5M1471.4 612.5 L1460.7 625.3M1460.7 625.3 L1450.0 638.1M1450.0 638.1 L1439.4 650.9M1439.4 650.9 L1428.7 663.7M1428.7 663.7 L1418.1 676.6M1418.1 676.6 L1407.4 689.4M1407.4 689.4 L1396.7 702.2M1396.7 702.2 L1386.1 715.0M1386.1 715.0 L1375.4 727.8M1375.4 727.8 L1364.8 740.7M1364.8 740.7 L1354.1 753.5M1354.1 753.5 L1343.4 766.3M1343.4 766.3 L1332.8 779.1M1332.8 779.1 L1322.1 791.9M1556.4 542.0 L1545.7 554.8M1545.7 554.8 L1535.0 567.7M1535.0 567.7 L1524.4 580.5M1524.4 580.5 L1513.7 593.3M1513.7 593.3 L1503.1 606.1M1503.1 606.1 L1492.4 618.9M1492.4 618.9 L1481.7 631.8M1481.7 631.8 L1471.1 644.6M1471.1 644.6 L1460.4 657.4M1460.4 657.4 L1449.8 670.2M1449.8 670.2 L1439.1 683.0M1439.1 683.0 L1428.4 695.9M1428.4 695.9 L1417.8 708.7M1417.8 708.7 L1407.1 721.5M1407.1 721.5 L1396.5 734.3M1396.5 734.3 L1385.8 747.1M1385.8 747.1 L1375.1 760.0M1375.1 760.0 L1364.5 772.8M1364.5 772.8 L1353.8 785.6M1353.8 785.6 L1343.2 798.4M1577.4 548.5 L1566.7 561.3M1566.7 561.3 L1556.1 574.1M1556.1 574.1 L1545.4 587.0M1545.4 587.0 L1534.8 599.8M1534.8 599.8 L1524.1 612.6M1524.1 612.6 L1513.4 625.4M1513.4 625.4 L1502.8 638.2M1502.8 638.2 L1492.1 651.1M1492.1 651.1 L1481.5 663.9M1481.5 663.9 L1470.8 676.7M1470.8 676.7 L1460.1 689.5M1460.1 689.5 L1449.5 702.3M1449.5 702.3 L1438.8 715.2M1438.8 715.2 L1428.2 728.0M1428.2 728.0 L1417.5 740.8M1417.5 740.8 L1406.8 753.6M1406.8 753.6 L1396.2 766.4M1396.2 766.4 L1385.5 779.3M1385.5 779.3 L1374.9 792.1M1374.9 792.1 L1364.2 804.9" fill="none" stroke="#0303ee" stroke-width="1.4"/>
<path d="M998.6 386.4 L1019.6 392.8M1019.6 392.8 L1040.7 399.3M1082.7 412.3 L1103.8 418.8M1103.8 418.8 L1124.8 425.2M966.9 392.7 L987.9 399.2M1114.2 438.1 L1135.2 444.5M1135.2 444.5 L1156.3 451.0M1156.3 451.0 L1177.3 457.5M1166.6 470.3 L1187.7 476.8M924.5 411.9 L945.5 418.3M1155.7 515.3 L1176.7 521.7M892.5 450.3 L913.6 456.8M913.6 456.8 L934.6 463.3M849.9 501.6 L870.9 508.1M870.9 508.1 L892.0 514.6M1091.7 592.2 L1112.8 598.7M1038.7 624.2 L1059.8 630.6M796.6 565.7 L817.6 572.2M986.0 624.0 L1007.0 630.5M1007.0 630.5 L1028.1 637.0M807.0 585.0 L828.0 591.5M954.3 630.4 L975.3 636.8M817.4 604.3 L838.4 610.8M838.4 610.8 L859.4 617.3M859.4 617.3 L880.5 623.7M880.5 623.7 L901.5 630.2M901.5 630.2 L922.6 636.7M922.6 636.7 L943.6 643.2M924.5 411.9 L913.8 424.7M913.8 424.7 L903.2 437.5M903.2 437.5 L892.5 450.3M849.9 501.6 L839.2 514.4M839.2 514.4 L828.6 527.2M828.6 527.2 L817.9 540.1M817.9 540.1 L807.2 552.9M807.2 552.9 L796.6 565.7M966.9 392.7 L956.2 405.5M956.2 405.5 L945.5 418.3M817.6 572.2 L807.0 585.0M998.6 386.4 L987.9 399.2M828.0 591.5 L817.4 604.3M1040.7 399.3 L1030.0 412.1M1082.7 412.3 L1072.1 425.1M1124.8 425.2 L1114.2 438.1M954.3 630.4 L943.6 643.2M986.0 624.0 L975.3 636.8M1177.3 457.5 L1166.6 470.3M1038.7 624.2 L1028.1 637.0M1187.7 476.8 L1177.0 489.6M1177.0 489.6 L1166.4 502.4M1166.4 502.4 L1155.7 515.3M1091.7 592.2 L1081.1 605.0M1081.1 605.0 L1070.4 617.8M1070.4 617.8 L1059.8 630.6M1176.7 521.7 L1166.1 534.6M1166.1 534.6 L1155.4 547.4M1155.4 547.4 L1144.8 560.2M1144.8 560.2 L1134.1 573.0M1134.1 573.0 L1123.4 585.8M1123.4 585.8 L1112.8 598.7" fill="none" stroke="#156fb2" stroke-width="1.4"/>
<path d="M987.9 399.2 L1009.0 405.7M1009.0 405.7 L1030.0 412.1M1072.1 425.1 L1093.1 431.6M1082.5 444.4 L1103.5 450.9M1103.5 450.9 L1124.6 457.4M1124.6 457.4 L1145.6 463.8M1134.9 476.7 L1156.0 483.1M934.9 431.2 L955.9 437.6M924.2 444.0 L945.3 450.5M1050.2 515.0 L1071.3 521.5M1028.9 540.6 L1049.9 547.1M1028.3 604.9 L1049.4 611.3M975.6 604.7 L996.6 611.2M996.6 611.2 L1017.7 617.7M838.7 578.7 L859.7 585.1M943.9 611.1 L964.9 617.5M849.1 598.0 L870.1 604.4M912.2 617.4 L933.2 623.9M934.9 431.2 L924.2 444.0M987.9 399.2 L977.2 412.0M977.2 412.0 L966.6 424.8M860.0 553.0 L849.3 565.8M849.3 565.8 L838.7 578.7M859.7 585.1 L849.1 598.0M891.4 578.8 L880.8 591.6M880.8 591.6 L870.1 604.4M933.5 591.8 L922.8 604.6M922.8 604.6 L912.2 617.4M1093.1 431.6 L1082.5 444.4M943.9 611.1 L933.2 623.9M1050.2 515.0 L1039.5 527.8M1039.5 527.8 L1028.9 540.6M975.6 604.7 L964.9 617.5M1071.3 521.5 L1060.6 534.3M1060.6 534.3 L1049.9 547.1M1145.6 463.8 L1134.9 476.7M1028.3 604.9 L1017.7 617.7M1156.0 483.1 L1145.3 496.0M1145.3 496.0 L1134.7 508.8M1134.7 508.8 L1124.0 521.6M1124.0 521.6 L1113.3 534.4M1113.3 534.4 L1102.7 547.2M1102.7 547.2 L1092.0 560.1M1092.0 560.1 L1081.4 572.9M1081.4 572.9 L1070.7 585.7M1070.7 585.7 L1060.0 598.5M1060.0 598.5 L1049.4 611.3" fill="none" stroke="#1e9770" stroke-width="1.4"/>
<path d="M1030.0 412.1 L1051.0 418.6M1051.0 418.6 L1072.1 425.1" fill="none" stroke="#157080" stroke-width="1.4"/>
<path d="M1093.1 431.6 L1114.2 438.1M956.2 405.5 L977.2 412.0M1145.6 463.8 L1166.6 470.3M945.5 418.3 L966.6 424.8M1156.0 483.1 L1177.0 489.6M913.8 424.7 L934.9 431.2M1145.3 496.0 L1166.4 502.4M903.2 437.5 L924.2 444.0M1134.7 508.8 L1155.7 515.3M1124.0 521.6 L1145.0 528.1M1145.0 528.1 L1166.1 534.6M1113.3 534.4 L1134.4 540.9M1134.4 540.9 L1155.4 547.4M1039.5 527.8 L1060.6 534.3M1102.7 547.2 L1123.7 553.7M1123.7 553.7 L1144.8 560.2M1092.0 560.1 L1113.1 566.5M1113.1 566.5 L1134.1 573.0M1081.4 572.9 L1102.4 579.4M1102.4 579.4 L1123.4 585.8M839.2 514.4 L860.3 520.9M860.3 520.9 L881.3 527.4M1070.7 585.7 L1091.7 592.2M828.6 527.2 L849.6 533.7M849.6 533.7 L870.6 540.2M1060.0 598.5 L1081.1 605.0M817.9 540.1 L838.9 546.5M838.9 546.5 L860.0 553.0M1049.4 611.3 L1070.4 617.8M807.2 552.9 L828.3 559.4M828.3 559.4 L849.3 565.8M1017.7 617.7 L1038.7 624.2M817.6 572.2 L838.7 578.7M880.8 591.6 L901.8 598.1M901.8 598.1 L922.8 604.6M964.9 617.5 L986.0 624.0M828.0 591.5 L849.1 598.0M870.1 604.4 L891.1 610.9M891.1 610.9 L912.2 617.4M933.2 623.9 L954.3 630.4M945.5 418.3 L934.9 431.2M924.2 444.0 L913.6 456.8M870.9 508.1 L860.3 520.9M860.3 520.9 L849.6 533.7M849.6 533.7 L838.9 546.5M838.9 546.5 L828.3 559.4M828.3 559.4 L817.6 572.2M838.7 578.7 L828.0 591.5M1019.6 392.8 L1009.0 405.7M849.1 598.0 L838.4 610.8M870.1 604.4 L859.4 617.3M912.5 585.3 L901.8 598.1M901.8 598.1 L891.1 610.9M891.1 610.9 L880.5 623.7M912.2 617.4 L901.5 630.2M1103.8 418.8 L1093.1 431.6M933.2 623.9 L922.6 636.7M1114.2 438.1 L1103.5 450.9M964.9 617.5 L954.3 630.4M1135.2 444.5 L1124.6 457.4M996.6 611.2 L986.0 624.0M1156.3 451.0 L1145.6 463.8M1017.7 617.7 L1007.0 630.5M1166.6 470.3 L1156.0 483.1M1049.4 611.3 L1038.7 624.2M1155.7 515.3 L1145.0 528.1M1145.0 528.1 L1134.4 540.9M1134.4 540.9 L1123.7 553.7M1123.7 553.7 L1113.1 566.5M1113.1 566.5 L1102.4 579.4M1102.4 579.4 L1091.7 592.2" fill="none" stroke="#1e96a2" stroke-width="1.4"/>
<path d="M1198.3 464.0 L1219.4 470.5M1198.1 496.1 L1219.1 502.6M1091.5 624.3 L1112.5 630.8M1049.1 643.5 L1070.1 649.9M1017.4 649.8 L1038.4 656.3M754.2 584.9 L775.3 591.3M964.7 649.7 L985.7 656.1M985.7 656.1 L1006.7 662.6M764.6 604.2 L785.6 610.6M785.6 610.6 L806.7 617.1M806.7 617.1 L827.7 623.6M827.7 623.6 L848.8 630.1M848.8 630.1 L869.8 636.6M869.8 636.6 L890.9 643.0M890.9 643.0 L911.9 649.5M911.9 649.5 L932.9 656.0M932.9 656.0 L954.0 662.5M775.3 591.3 L764.6 604.2M964.7 649.7 L954.0 662.5M1017.4 649.8 L1006.7 662.6M1219.7 438.3 L1209.0 451.2M1209.0 451.2 L1198.3 464.0M1049.1 643.5 L1038.4 656.3M1219.4 470.5 L1208.7 483.3M1208.7 483.3 L1198.1 496.1M1091.5 624.3 L1080.8 637.1M1080.8 637.1 L1070.1 649.9M1219.1 502.6 L1208.5 515.4M1208.5 515.4 L1197.8 528.2M1197.8 528.2 L1187.1 541.0M1187.1 541.0 L1176.5 553.9M1176.5 553.9 L1165.8 566.7M1165.8 566.7 L1155.2 579.5M1155.2 579.5 L1144.5 592.3M1144.5 592.3 L1133.8 605.1M1133.8 605.1 L1123.2 618.0M1123.2 618.0 L1112.5 630.8" fill="none" stroke="#0725d8" stroke-width="1.4"/>
<path d="M977.2 412.0 L998.3 418.5M1092.8 463.7 L1113.9 470.2M1113.9 470.2 L1134.9 476.7M1103.2 483.0 L1124.3 489.5M1124.3 489.5 L1145.3 496.0M1092.6 495.8 L1113.6 502.3M1113.6 502.3 L1134.7 508.8M1060.9 502.2 L1081.9 508.6M1081.9 508.6 L1103.0 515.1M1103.0 515.1 L1124.0 521.6M1029.2 508.5 L1050.2 515.0M1071.3 521.5 L1092.3 527.9M1092.3 527.9 L1113.3 534.4M1018.5 521.3 L1039.5 527.8M1060.6 534.3 L1081.6 540.8M1081.6 540.8 L1102.7 547.2M1007.8 534.1 L1028.9 540.6M1049.9 547.1 L1071.0 553.6M1071.0 553.6 L1092.0 560.1M1018.2 553.4 L1039.3 559.9M1039.3 559.9 L1060.3 566.4M1060.3 566.4 L1081.4 572.9M1028.6 572.7 L1049.7 579.2M1049.7 579.2 L1070.7 585.7M1018.0 585.6 L1039.0 592.0M1039.0 592.0 L1060.0 598.5M986.2 591.9 L1007.3 598.4M1007.3 598.4 L1028.3 604.9M849.3 565.8 L870.4 572.3M954.5 598.2 L975.6 604.7M859.7 585.1 L880.8 591.6M922.8 604.6 L943.9 611.1M1009.0 405.7 L998.3 418.5M870.4 572.3 L859.7 585.1M1030.0 412.1 L1019.3 425.0M1051.0 418.6 L1040.4 431.4M1072.1 425.1 L1061.4 437.9M954.5 598.2 L943.9 611.1M1103.5 450.9 L1092.8 463.7M1060.9 502.2 L1050.2 515.0M1028.9 540.6 L1018.2 553.4M986.2 591.9 L975.6 604.7M1124.6 457.4 L1113.9 470.2M1113.9 470.2 L1103.2 483.0M1092.6 495.8 L1081.9 508.6M1081.9 508.6 L1071.3 521.5M1049.9 547.1 L1039.3 559.9M1039.3 559.9 L1028.6 572.7M1018.0 585.6 L1007.3 598.4M1007.3 598.4 L996.6 611.2M1134.9 476.7 L1124.3 489.5M1124.3 489.5 L1113.6 502.3M1113.6 502.3 L1103.0 515.1M1103.0 515.1 L1092.3 527.9M1092.3 527.9 L1081.6 540.8M1081.6 540.8 L1071.0 553.6M1071.0 553.6 L1060.3 566.4M1060.3 566.4 L1049.7 579.2M1049.7 579.2 L1039.0 592.0M1039.0 592.0 L1028.3 604.9" fill="none" stroke="#1e983e" stroke-width="1.4"/>
<path d="M998.3 418.5 L1019.3 425.0M1019.3 425.0 L1040.4 431.4M1040.4 431.4 L1061.4 437.9M1061.4 437.9 L1082.5 444.4M870.4 572.3 L891.4 578.8M933.5 591.8 L954.5 598.2M998.3 418.5 L987.6 431.3M881.0 559.5 L870.4 572.3M1082.5 444.4 L1071.8 457.2M965.2 585.4 L954.5 598.2" fill="none" stroke="#289223" stroke-width="1.4"/>
<path d="M966.6 424.8 L987.6 431.3M1071.8 457.2 L1092.8 463.7M1082.2 476.5 L1103.2 483.0M1071.5 489.3 L1092.6 495.8M1039.8 495.7 L1060.9 502.2M997.2 547.0 L1018.2 553.4M1007.6 566.3 L1028.6 572.7M996.9 579.1 L1018.0 585.6M860.0 553.0 L881.0 559.5M965.2 585.4 L986.2 591.9M955.9 437.6 L945.3 450.5M1092.8 463.7 L1082.2 476.5M1071.5 489.3 L1060.9 502.2M1018.2 553.4 L1007.6 566.3M996.9 579.1 L986.2 591.9M1103.2 483.0 L1092.6 495.8M1028.6 572.7 L1018.0 585.6" fill="none" stroke="#1b9223" stroke-width="1.4"/>
<path d="M987.6 431.3 L1008.7 437.8M1008.7 437.8 L1029.7 444.3M1029.7 444.3 L1050.8 450.7M1050.8 450.7 L1071.8 457.2M881.0 559.5 L902.1 566.0M902.1 566.0 L923.1 572.5M923.1 572.5 L944.2 578.9M944.2 578.9 L965.2 585.4" fill="none" stroke="#7d7208" stroke-width="1.4"/>
<path d="M955.9 437.6 L977.0 444.1M1061.1 470.0 L1082.2 476.5M945.3 450.5 L966.3 456.9M1050.5 482.9 L1071.5 489.3M934.6 463.3 L955.7 469.8M924.0 476.1 L945.0 482.6M913.3 488.9 L934.3 495.4M902.6 501.7 L923.7 508.2M892.0 514.6 L913.0 521.0M881.3 527.4 L902.4 533.9M986.5 559.8 L1007.6 566.3M870.6 540.2 L891.7 546.7M975.9 572.6 L996.9 579.1M1082.2 476.5 L1071.5 489.3M1007.6 566.3 L996.9 579.1" fill="none" stroke="#198c08" stroke-width="1.4"/>
<path d="M977.0 444.1 L998.0 450.6M998.0 450.6 L1019.1 457.1M1019.1 457.1 L1040.1 463.6M1040.1 463.6 L1061.1 470.0M1018.8 489.2 L1039.8 495.7M945.0 482.6 L966.0 489.1M923.7 508.2 L944.7 514.7M976.1 540.5 L997.2 547.0M891.7 546.7 L912.7 553.2M912.7 553.2 L933.8 559.6M933.8 559.6 L954.8 566.1M954.8 566.1 L975.9 572.6M966.0 489.1 L955.4 501.9M955.4 501.9 L944.7 514.7M1018.8 489.2 L1008.1 502.0M1008.1 502.0 L997.5 514.8M997.5 514.8 L986.8 527.7M986.8 527.7 L976.1 540.5" fill="none" stroke="#cc3006" stroke-width="1.4"/>
<path d="M966.3 456.9 L987.4 463.4M987.4 463.4 L1008.4 469.9M1008.4 469.9 L1029.4 476.4M1029.4 476.4 L1050.5 482.9M955.7 469.8 L976.7 476.2M976.7 476.2 L997.7 482.7M997.7 482.7 L1018.8 489.2M966.0 489.1 L987.1 495.5M987.1 495.5 L1008.1 502.0M955.4 501.9 L976.4 508.4M976.4 508.4 L997.5 514.8M944.7 514.7 L965.8 521.2M965.8 521.2 L986.8 527.7M913.0 521.0 L934.1 527.5M934.1 527.5 L955.1 534.0M955.1 534.0 L976.1 540.5M902.4 533.9 L923.4 540.3M923.4 540.3 L944.4 546.8M944.4 546.8 L965.5 553.3M965.5 553.3 L986.5 559.8M998.0 450.6 L987.4 463.4M987.4 463.4 L976.7 476.2M976.7 476.2 L966.0 489.1M944.7 514.7 L934.1 527.5M934.1 527.5 L923.4 540.3M923.4 540.3 L912.7 553.2M1019.1 457.1 L1008.4 469.9M1008.4 469.9 L997.7 482.7M997.7 482.7 L987.1 495.5M987.1 495.5 L976.4 508.4M976.4 508.4 L965.8 521.2M965.8 521.2 L955.1 534.0M955.1 534.0 L944.4 546.8M944.4 546.8 L933.8 559.6M1040.1 463.6 L1029.4 476.4M1029.4 476.4 L1018.8 489.2M976.1 540.5 L965.5 553.3M965.5 553.3 L954.8 566.1" fill="none" stroke="#d00804" stroke-width="1.4"/>
<path d="M1008.1 502.0 L1029.2 508.5M934.3 495.4 L955.4 501.9M997.5 514.8 L1018.5 521.3M986.8 527.7 L1007.8 534.1M1008.7 437.8 L998.0 450.6M912.7 553.2 L902.1 566.0M1029.7 444.3 L1019.1 457.1M933.8 559.6 L923.1 572.5M1050.8 450.7 L1040.1 463.6M954.8 566.1 L944.2 578.9" fill="none" stroke="#c85808" stroke-width="1.4"/>
<path d="M891.4 578.8 L912.5 585.3M912.5 585.3 L933.5 591.8" fill="none" stroke="#289155" stroke-width="1.4"/>
<path d="M966.6 424.8 L955.9 437.6M945.3 450.5 L934.6 463.3M892.0 514.6 L881.3 527.4M881.3 527.4 L870.6 540.2M870.6 540.2 L860.0 553.0" fill="none" stroke="#1b9155" stroke-width="1.4"/>
<path d="M934.6 463.3 L924.0 476.1M924.0 476.1 L913.3 488.9M913.3 488.9 L902.6 501.7M902.6 501.7 L892.0 514.6" fill="none" stroke="#126a65" stroke-width="1.4"/>
<path d="M987.6 431.3 L977.0 444.1M945.0 482.6 L934.3 495.4M934.3 495.4 L923.7 508.2M891.7 546.7 L881.0 559.5M1071.8 457.2 L1061.1 470.0M975.9 572.6 L965.2 585.4" fill="none" stroke="#707208" stroke-width="1.4"/>
<path d="M977.0 444.1 L966.3 456.9M966.3 456.9 L955.7 469.8M955.7 469.8 L945.0 482.6M923.7 508.2 L913.0 521.0M913.0 521.0 L902.4 533.9M902.4 533.9 L891.7 546.7M1061.1 470.0 L1050.5 482.9M1050.5 482.9 L1039.8 495.7M997.2 547.0 L986.5 559.8M986.5 559.8 L975.9 572.6" fill="none" stroke="#744a06" stroke-width="1.4"/>
<path d="M1019.3 425.0 L1008.7 437.8M902.1 566.0 L891.4 578.8M1040.4 431.4 L1029.7 444.3M923.1 572.5 L912.5 585.3M1061.4 437.9 L1050.8 450.7M944.2 578.9 L933.5 591.8" fill="none" stroke="#328c08" stroke-width="1.4"/>
<path d="M1039.8 495.7 L1029.2 508.5M1029.2 508.5 L1018.5 521.3M1018.5 521.3 L1007.8 534.1M1007.8 534.1 L997.2 547.0" fill="none" stroke="#737823" stroke-width="1.4"/>
<path d="M946.1 354.1 h0.01M732.9 610.5 h0.01M967.1 360.6 h0.01M753.9 617.0 h0.01M988.2 367.1 h0.01M775.0 623.5 h0.01M1009.2 373.5 h0.01M796.0 629.9 h0.01M1030.3 380.0 h0.01M817.1 636.4 h0.01M1051.3 386.5 h0.01M838.1 642.9 h0.01M1072.4 393.0 h0.01M859.2 649.4 h0.01M1093.4 399.5 h0.01M880.2 655.9 h0.01M1114.4 405.9 h0.01M901.2 662.3 h0.01M1135.5 412.4 h0.01M922.3 668.8 h0.01M1156.5 418.9 h0.01M943.3 675.3 h0.01M1177.6 425.4 h0.01M964.4 681.8 h0.01M1198.6 431.9 h0.01M985.4 688.3 h0.01M1219.7 438.3 h0.01M1006.5 694.7 h0.01M1240.7 444.8 h0.01M1027.5 701.2 h0.01M1261.8 451.3 h0.01M1048.5 707.7 h0.01M1282.8 457.8 h0.01M1069.6 714.2 h0.01M1303.8 464.3 h0.01M1090.6 720.7 h0.01M1324.9 470.7 h0.01M1111.7 727.1 h0.01M1345.9 477.2 h0.01M1132.7 733.6 h0.01M1367.0 483.7 h0.01M1153.8 740.1 h0.01M1388.0 490.2 h0.01M1174.8 746.6 h0.01M1409.1 496.7 h0.01M1195.9 753.1 h0.01M1430.1 503.1 h0.01M1216.9 759.5 h0.01M1451.1 509.6 h0.01M1237.9 766.0 h0.01M1472.2 516.1 h0.01M1259.0 772.5 h0.01M1493.2 522.6 h0.01M1280.0 779.0 h0.01M1514.3 529.1 h0.01M1301.1 785.5 h0.01M1535.3 535.5 h0.01M1322.1 791.9 h0.01M1556.4 542.0 h0.01M1343.2 798.4 h0.01M1577.4 548.5 h0.01M1364.2 804.9 h0.01M935.4 366.9 h0.01M1566.7 561.3 h0.01M924.8 379.7 h0.01M1556.1 574.1 h0.01M914.1 392.6 h0.01M1545.4 587.0 h0.01M903.5 405.4 h0.01M1534.8 599.8 h0.01M892.8 418.2 h0.01M1524.1 612.6 h0.01M882.1 431.0 h0.01M1513.4 625.4 h0.01M871.5 443.8 h0.01M1502.8 638.2 h0.01M860.8 456.7 h0.01M1492.1 651.1 h0.01M850.2 469.5 h0.01M1481.5 663.9 h0.01M839.5 482.3 h0.01M1470.8 676.7 h0.01M828.8 495.1 h0.01M1460.1 689.5 h0.01M818.2 507.9 h0.01M1449.5 702.3 h0.01M807.5 520.8 h0.01M1438.8 715.2 h0.01M796.9 533.6 h0.01M1428.2 728.0 h0.01M786.2 546.4 h0.01M1417.5 740.8 h0.01M775.5 559.2 h0.01M1406.8 753.6 h0.01M764.9 572.0 h0.01M1396.2 766.4 h0.01M754.2 584.9 h0.01M1385.5 779.3 h0.01M743.6 597.7 h0.01M1374.9 792.1 h0.01" fill="none" stroke="#0a0a30" stroke-width="2.8" stroke-linecap="round"/>
</svg>

<!-- left tools -->
<div class="abs tool" style="left:504.200px;top:165px;background:#2b87c9"></div>
<div class="abs tool" style="left:504.200px;top:195.100px"></div>
<div class="abs tool" style="left:504.200px;top:223.900px"></div>
<div class="abs tool" style="left:504.200px;top:252.700px"></div>
<div class="abs tool" style="left:504.200px;top:282.300px"></div>
<div class="abs tool" style="left:504.200px;top:311.500px;background:#df3d33"></div>
<div class="abs tool" style="left:504.200px;top:354.600px;background:#f3f3f3"></div>
<div class="abs tool" style="left:504.200px;top:383.600px;background:#f3f3f3"></div>
<div class="abs tool" style="left:504.200px;top:412.700px"></div>
<svg class="abs" style="left:503.700px;top:164.500px" width="25" height="290" viewBox="0 0 25 290" fill="none">
<path d="M10.500 9l5.500 4-2.300.5 1 2.500-1.300.5-1-2.500L10.700 15.500z" fill="#fff"/>
<path d="M15.200 40.500a3.200 3.200 0 1 1-1.200-1.500" stroke="#777" stroke-width="1.200"/><path d="M15.800 37.200v2.600h-2.600z" fill="#777"/>
<path d="M8.500 69.500h8M8.500 72.500h8M8.500 69.500l1.500-1.500M16.500 72.500l-1.500 1.500" stroke="#666" stroke-width="1.300"/>
<path d="M9 99.500l3.500-3v2c3 0 4.500 1.500 4.500 4.500-1-1.800-2.300-2.300-4.500-2.300v2z" fill="#666"/>
<path d="M9 125.500h2.500v2.500H9zM13.500 125.500H16v2.500h-2.500zM9 130h2.500v2H9zM13.500 130H16v2h-2.500z" fill="#aaa"/>
<circle cx="12.500" cy="159" r="3.600" stroke="#ffd9c9" stroke-width="1.200"/><circle cx="12.500" cy="159" r="1.300" fill="#ffd9c9"/>
<path d="M9.500 199.500h5v4h-5zM14.500 199l2-1" stroke="#dcdcdc" stroke-width="1.200"/>
<path d="M9.500 228.500h6M9.500 231h6M9.500 233.500h6M11.500 227v8M13.500 227v8" stroke="#dedede" stroke-width=".9"/>
<path d="M7.500 260.200c1.500-2.300 3.200-3.300 5-3.300s3.500 1 5 3.300c-1.500 2.300-3.200 3.300-5 3.300s-3.500-1-5-3.300z" stroke="#666" stroke-width="1.100"/><circle cx="12.500" cy="260.200" r="1.700" fill="#666"/>
</svg>

<!-- right tools -->
<div class="abs tool" style="left:1781px;top:165.700px;width:25.500px;height:25.500px"></div>
<div class="abs tool" style="left:1781px;top:198px;width:25.500px;height:25.500px"></div>
<div class="abs tool" style="left:1781px;top:229.600px;width:25.500px;height:25.500px"></div>
<div class="abs tool" style="left:1781px;top:261.500px;width:25.500px;height:25.500px"></div>
<svg class="abs" style="left:1781px;top:165.700px" width="26" height="125" viewBox="0 0 26 125" fill="none" stroke="#aaa" stroke-width="1">
<path d="M7.500 8.500h9v9h-9zM7.500 8.500l2-2h9l-2 2M18.500 6.500v9l-2 2"/><path d="M7.500 8.500l2-2h9l-2 2z" fill="#999"/>
<path d="M7.500 40.500h9v9h-9zM7.500 40.500l2-2h9l-2 2M18.500 38.500v9l-2 2"/><path d="M9.500 42.500h7v7h-7z" fill="#999" stroke="none"/>
<path d="M7.500 72.500h9v9h-9zM7.500 72.500l2-2h9l-2 2M18.500 70.500v9l-2 2"/><path d="M16.500 72.500l2-2v9l-2 2z" fill="#999"/>
<path d="M7.500 104.500h9v9h-9zM7.500 104.500l2-2h9l-2 2M18.500 102.500v9l-2 2M9.500 102.500v9h9"/>
</svg>

<!-- legend -->
<span class="t" style="left:515px;top:754px;color:#555;font-size:12px;font-weight:bold" id="lgt">Envelope reinf. check ratio</span>
<div class="abs" style="left:515px;top:788px;width:22px;height:172px;background:linear-gradient(#f20d05 0 11.110%,#ff7f10 0 22.220%,#ffff14 0 33.330%,#7bef04 0 44.440%,#4df000 0 55.550%,#5ffb7b 0 66.660%,#5ffbff 0 77.770%,#1f7efa 0 88.880%,#0303f6 0)"></div>
<span class="t lv" style="top:783px">0.21073</span>
<span class="t lv" style="top:802px">0.18732</span>
<span class="t lv" style="top:820.500px">0.16391</span>
<span class="t lv" style="top:839.500px">0.14049</span>
<span class="t lv" style="top:858.500px">0.11708</span>
<span class="t lv" style="top:878px">0.09367</span>
<span class="t lv" style="top:896.500px">0.07025</span>
<span class="t lv" style="top:916px">0.04684</span>
<span class="t lv" style="top:935px">0.02343</span>
<span class="t lv" style="top:954.500px">0.00001</span>
<style>.lv{left:545.500px;color:#111;font-size:12.200px}</style>
<div class="abs" style="left:571.500px;top:802px;width:1px;height:13px;background:#222"></div>
<div class="abs" style="left:569.500px;top:809px;width:5px;height:1px;background:#222"></div>
<span class="t" style="left:515px;top:980px;color:#7a7a7a;font-size:12px" id="sel">Selected elements: 0</span>

<!-- chat bubble -->
<div class="abs" style="left:1759px;top:940px;width:41px;height:41px;border-radius:50%;background:#2a87d0;box-shadow:0 2px 8px rgba(0,0,0,.18)"></div>
<svg class="abs" style="left:1770px;top:950px" width="20" height="22" viewBox="0 0 20 22"><path d="M3 .8h13.500a2.200 2.200 0 0 1 2.200 2.200v17.500l-4.500-3.300H3A2.200 2.200 0 0 1 .8 15V3A2.200 2.200 0 0 1 3 .8z" fill="#f4f9fd"/><path d="M4.500 11.500c3 2.300 8 2.300 11 0" fill="none" stroke="#2a87d0" stroke-width="1.200" stroke-linecap="round"/></svg>

<!-- status bar -->
<div id="status" class="abs"></div>
<div class="abs" style="left:1692px;top:1009px;width:121px;height:23px;background:#1b2747"></div>
<span class="t" style="left:1701px;top:1016px;color:#e9ecf3;font-size:10.800px;font-weight:bold" id="metric">Metric</span>
<span class="t" style="left:1757px;top:1016px;color:#e9ecf3;font-size:10.800px;font-weight:bold" id="newfile">New File*</span>
</body></html>
